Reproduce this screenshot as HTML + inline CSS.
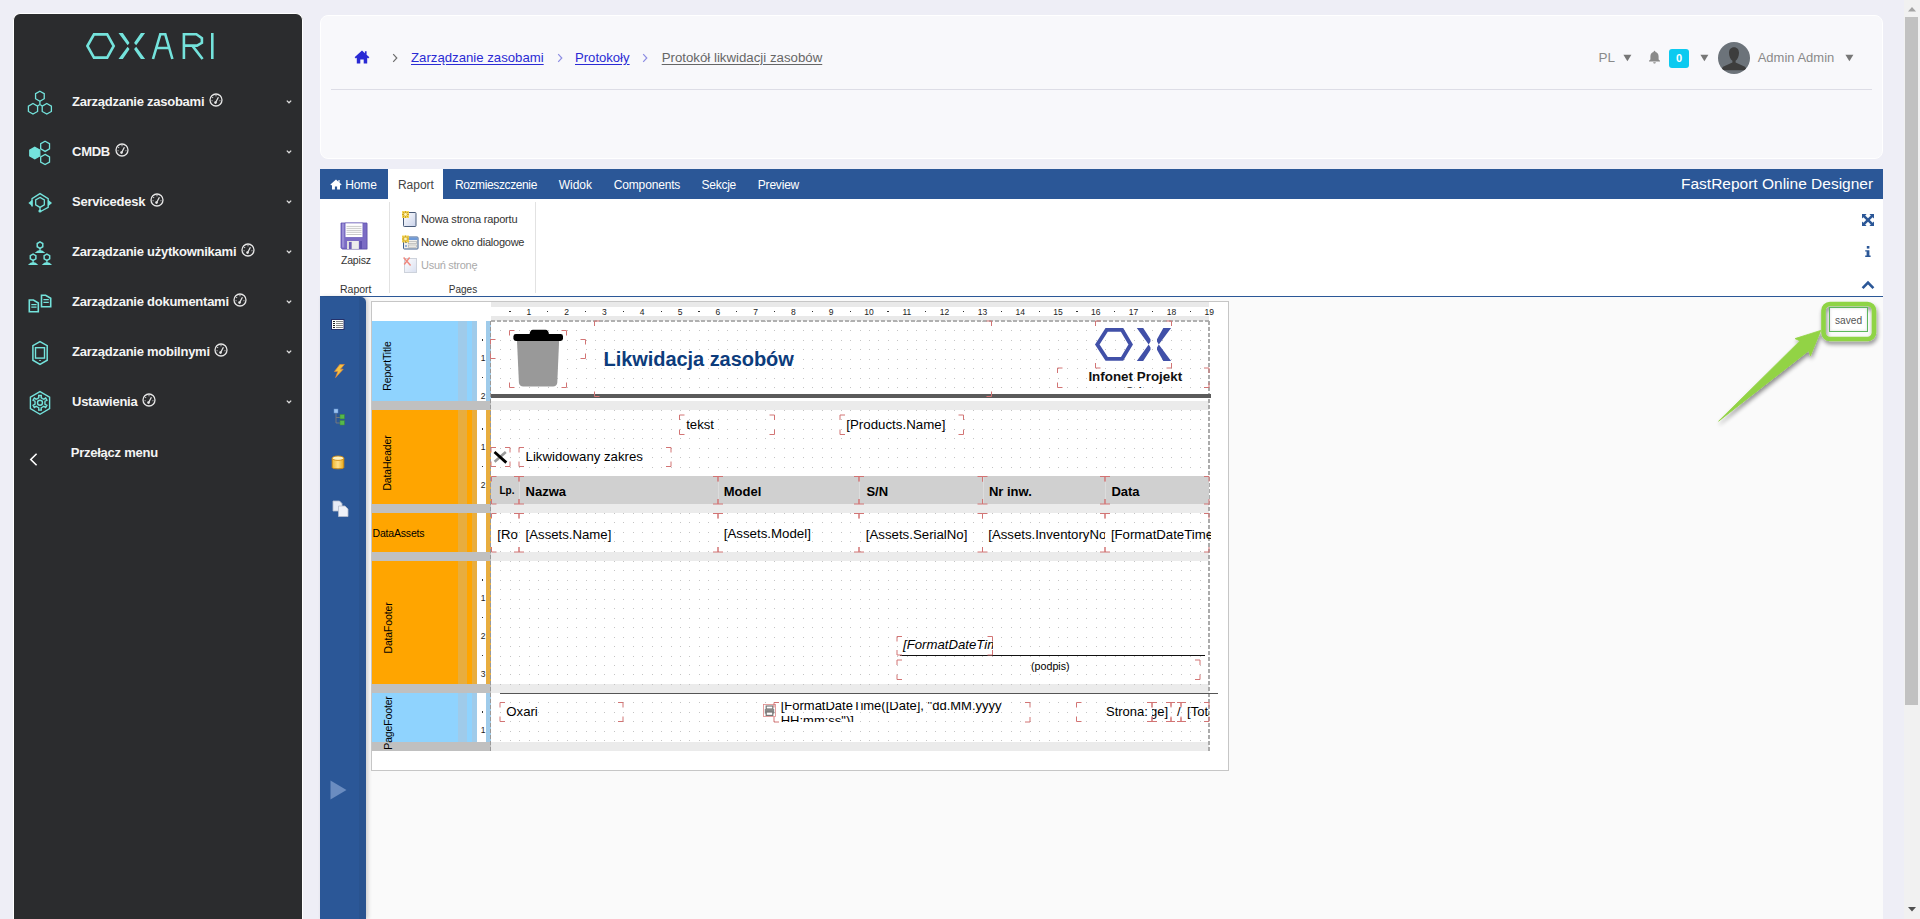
<!DOCTYPE html>
<html><head><meta charset="utf-8">
<style>
*{box-sizing:border-box;margin:0;padding:0}
html,body{width:1920px;height:919px;overflow:hidden}
body{background:#eeeef6;font-family:"Liberation Sans",sans-serif;position:relative}
.a{position:absolute}
.t{position:absolute;white-space:nowrap;line-height:1}
/* sidebar */
#sb{left:13px;top:13px;width:290px;height:920px;background:#2b2c2e;border:1px solid #fff;border-bottom:none;border-radius:7px 7px 0 0}
.mi{position:absolute;left:72px;color:#f4f4f4;font-weight:bold;font-size:13px;letter-spacing:-0.25px;line-height:1}
.chev{position:absolute;left:286px;width:6px;height:4px}
/* header */
#hd{left:320px;top:15px;width:1563px;height:144px;background:#f8f8fb;border:1px solid #fff;border-radius:8px}
/* scrollbar */
#scr{left:1904px;top:0;width:16px;height:919px;background:#f1f1f1}
#thumb{left:1905px;top:17px;width:13px;height:688px;background:#c1c1c1}
/* fastreport */
#tabs{left:320px;top:169px;width:1563px;height:30px;background:#2b5797}
.tab{position:absolute;top:180px;color:#fff;font-size:12px;letter-spacing:-0.4px;line-height:1}
#rib{left:320px;top:199px;width:1563px;height:98px;background:#fff;border-bottom:1px solid #2b5797}
#lt{left:320px;top:297px;width:46px;height:622px;background:linear-gradient(90deg,#2b5797 0 39px,#29538f 39px);border-radius:0 5px 0 0;box-shadow:2px 0 4px rgba(0,0,0,0.18)}
#ws{left:366px;top:297px;width:1517px;height:622px;background:#fafafa}
</style></head>
<body>
<!-- Sidebar -->
<div id="sb" class="a"></div>
<svg class="a" style="left:80px;top:25px" width="140" height="40" viewBox="0 0 140 40" fill="none" stroke="#74e3dc" stroke-width="2.6">
<path d="M7.4 21L14 9.4H27.2L33.7 21L27.2 32.6H14Z"/>
<path d="M38.5 8H42.8L49.3 17.4V18.2L47.6 20.2Z M38.5 34H42.8L49.3 24.6V23.8L47.6 21.8Z M65.1 8H60.9L54.3 17.4V18.2L56.2 20.2Z M65.1 34H60.9L54.3 24.6V23.8L56.2 21.8Z" fill="#74e3dc" stroke="none"/>
<path d="M73 34L80.3 9.3H85.3L92.4 34M75.6 23H89.8"/>
<path d="M103.9 34V9.3H116.4L121.9 13.2V17.8L117 20.6H103.9M112.3 20.6L122.6 34"/>
<path d="M132.3 8V34"/>
</svg>
<svg class="a" style="left:24px;top:86px" width="32" height="32" viewBox="0 0 32 32" fill="none" stroke="#74e3dc" stroke-width="1.3"><path d="M15.90,5.20 L20.23,7.70 L20.23,12.70 L15.90,15.20 L11.57,12.70 L11.57,7.70Z"/><path d="M9.00,17.50 L13.59,20.15 L13.59,25.45 L9.00,28.10 L4.41,25.45 L4.41,20.15Z"/><path d="M22.80,17.50 L27.39,20.15 L27.39,25.45 L22.80,28.10 L18.21,25.45 L18.21,20.15Z"/><path d="M15.9 15.2V18.5M13.5 20L15.9 18.5L18.3 20"/></svg>
<div class="mi" id="mi0" style="top:94.8px">Zarządzanie zasobami<svg style="display:inline-block;vertical-align:top;margin-left:4.6px;margin-top:-2px" width="14" height="14" viewBox="0 0 14 14" fill="none" stroke="#e6e6e6" stroke-width="1.3"><circle cx="7" cy="7" r="6"/><path d="M6.6 9.6L9.4 4.2" stroke-width="1.2"/><circle cx="6.5" cy="9.6" r="1.3" fill="#e6e6e6" stroke="none"/><path d="M7 2.3V3.3M3.4 4.2L4 4.8M2.6 7.7H3.5M11.4 7.7H10.5" stroke-width="1.1"/></svg></div>
<svg class="a" style="left:285px;top:99px" width="8" height="6" viewBox="0 0 8 6" fill="none" stroke="#ddd" stroke-width="1.3"><path d="M1.8 1.6L4 3.8L6.2 1.6"/></svg>
<svg class="a" style="left:24px;top:136px" width="32" height="32" viewBox="0 0 32 32" fill="none" stroke="#74e3dc" stroke-width="1.3"><path d="M10.80,11.20 L15.82,14.10 L15.82,19.90 L10.80,22.80 L5.78,19.90 L5.78,14.10Z" fill="#74e3dc"/><path d="M21.10,5.20 L25.52,7.75 L25.52,12.85 L21.10,15.40 L16.68,12.85 L16.68,7.75Z"/><path d="M21.10,18.40 L25.52,20.95 L25.52,26.05 L21.10,28.60 L16.68,26.05 L16.68,20.95Z"/></svg>
<div class="mi" id="mi1" style="top:144.8px">CMDB<svg style="display:inline-block;vertical-align:top;margin-left:4.6px;margin-top:-2px" width="14" height="14" viewBox="0 0 14 14" fill="none" stroke="#e6e6e6" stroke-width="1.3"><circle cx="7" cy="7" r="6"/><path d="M6.6 9.6L9.4 4.2" stroke-width="1.2"/><circle cx="6.5" cy="9.6" r="1.3" fill="#e6e6e6" stroke="none"/><path d="M7 2.3V3.3M3.4 4.2L4 4.8M2.6 7.7H3.5M11.4 7.7H10.5" stroke-width="1.1"/></svg></div>
<svg class="a" style="left:285px;top:149px" width="8" height="6" viewBox="0 0 8 6" fill="none" stroke="#ddd" stroke-width="1.3"><path d="M1.8 1.6L4 3.8L6.2 1.6"/></svg>
<svg class="a" style="left:24px;top:186px" width="32" height="32" viewBox="0 0 32 32" fill="none" stroke="#74e3dc" stroke-width="1.3"><path d="M8 20.5V12.6L16 7.6L24.2 12.6V21.3L17 25.2"/><path d="M16.00,11.40 L20.33,13.90 L20.33,18.90 L16.00,21.40 L11.67,18.90 L11.67,13.90Z"/><path d="M16 21.4V24.5"/><circle cx="16" cy="25" r="1.6" fill="#74e3dc" stroke="none"/><path d="M4.4 17L8.5 13.6V20.4Z" fill="#74e3dc" stroke="none"/><path d="M28 17L23.9 13.6V20.4Z" fill="#74e3dc" stroke="none"/></svg>
<div class="mi" id="mi2" style="top:194.8px">Servicedesk<svg style="display:inline-block;vertical-align:top;margin-left:4.6px;margin-top:-2px" width="14" height="14" viewBox="0 0 14 14" fill="none" stroke="#e6e6e6" stroke-width="1.3"><circle cx="7" cy="7" r="6"/><path d="M6.6 9.6L9.4 4.2" stroke-width="1.2"/><circle cx="6.5" cy="9.6" r="1.3" fill="#e6e6e6" stroke="none"/><path d="M7 2.3V3.3M3.4 4.2L4 4.8M2.6 7.7H3.5M11.4 7.7H10.5" stroke-width="1.1"/></svg></div>
<svg class="a" style="left:285px;top:199px" width="8" height="6" viewBox="0 0 8 6" fill="none" stroke="#ddd" stroke-width="1.3"><path d="M1.8 1.6L4 3.8L6.2 1.6"/></svg>
<svg class="a" style="left:24px;top:236px" width="32" height="32" viewBox="0 0 32 32" fill="none" stroke="#74e3dc" stroke-width="1.3"><path d="M16.00,5.90 L18.77,7.50 L18.77,10.70 L16.00,12.30 L13.23,10.70 L13.23,7.50Z" stroke-width="1.5"/><path d="M10.7 17.0Q16 11.0 21.3 17.0Z" fill="#74e3dc" stroke="none"/><path d="M16 12.1V14.5" stroke-width="1.2"/><path d="M9.10,18.10 L11.87,19.70 L11.87,22.90 L9.10,24.50 L6.33,22.90 L6.33,19.70Z" stroke-width="1.5"/><path d="M3.8999999999999995 29.0Q9.1 23.0 14.3 29.0Z" fill="#74e3dc" stroke="none"/><path d="M9.1 24.3V26.5" stroke-width="1.2"/><path d="M22.90,18.10 L25.67,19.70 L25.67,22.90 L22.90,24.50 L20.13,22.90 L20.13,19.70Z" stroke-width="1.5"/><path d="M17.7 29.0Q22.9 23.0 28.099999999999998 29.0Z" fill="#74e3dc" stroke="none"/><path d="M22.9 24.3V26.5" stroke-width="1.2"/></svg>
<div class="mi" id="mi3" style="top:244.8px">Zarządzanie użytkownikami<svg style="display:inline-block;vertical-align:top;margin-left:4.6px;margin-top:-2px" width="14" height="14" viewBox="0 0 14 14" fill="none" stroke="#e6e6e6" stroke-width="1.3"><circle cx="7" cy="7" r="6"/><path d="M6.6 9.6L9.4 4.2" stroke-width="1.2"/><circle cx="6.5" cy="9.6" r="1.3" fill="#e6e6e6" stroke="none"/><path d="M7 2.3V3.3M3.4 4.2L4 4.8M2.6 7.7H3.5M11.4 7.7H10.5" stroke-width="1.1"/></svg></div>
<svg class="a" style="left:285px;top:249px" width="8" height="6" viewBox="0 0 8 6" fill="none" stroke="#ddd" stroke-width="1.3"><path d="M1.8 1.6L4 3.8L6.2 1.6"/></svg>
<svg class="a" style="left:24px;top:286px" width="32" height="32" viewBox="0 0 32 32" fill="none" stroke="#74e3dc" stroke-width="1.3"><path d="M5.3 14H9.4L14.3 17V25.7H5.3Z" stroke-width="1.6"/><path d="M7.3 18.6H12.6M7.3 21.2H12.6"/><path d="M17.5 9.2H21.6L26.7 12.2V20.8H17.5Z" stroke-width="1.6"/><path d="M19.4 13.6H24.8M19.4 16.4H24.8"/></svg>
<div class="mi" id="mi4" style="top:294.8px">Zarządzanie dokumentami<svg style="display:inline-block;vertical-align:top;margin-left:4.6px;margin-top:-2px" width="14" height="14" viewBox="0 0 14 14" fill="none" stroke="#e6e6e6" stroke-width="1.3"><circle cx="7" cy="7" r="6"/><path d="M6.6 9.6L9.4 4.2" stroke-width="1.2"/><circle cx="6.5" cy="9.6" r="1.3" fill="#e6e6e6" stroke="none"/><path d="M7 2.3V3.3M3.4 4.2L4 4.8M2.6 7.7H3.5M11.4 7.7H10.5" stroke-width="1.1"/></svg></div>
<svg class="a" style="left:285px;top:299px" width="8" height="6" viewBox="0 0 8 6" fill="none" stroke="#ddd" stroke-width="1.3"><path d="M1.8 1.6L4 3.8L6.2 1.6"/></svg>
<svg class="a" style="left:24px;top:336px" width="32" height="32" viewBox="0 0 32 32" fill="none" stroke="#74e3dc" stroke-width="1.3"><path d="M16 5.6L23.2 9.6V24.2L16 28.4L8.9 24.2V9.6Z" stroke-width="1.5"/><rect x="11.5" y="11.7" width="9" height="10.4" stroke-width="1.4"/><ellipse cx="16" cy="24.5" rx="1.1" ry="0.6" fill="#74e3dc" stroke="none"/></svg>
<div class="mi" id="mi5" style="top:344.8px">Zarządzanie mobilnymi<svg style="display:inline-block;vertical-align:top;margin-left:4.6px;margin-top:-2px" width="14" height="14" viewBox="0 0 14 14" fill="none" stroke="#e6e6e6" stroke-width="1.3"><circle cx="7" cy="7" r="6"/><path d="M6.6 9.6L9.4 4.2" stroke-width="1.2"/><circle cx="6.5" cy="9.6" r="1.3" fill="#e6e6e6" stroke="none"/><path d="M7 2.3V3.3M3.4 4.2L4 4.8M2.6 7.7H3.5M11.4 7.7H10.5" stroke-width="1.1"/></svg></div>
<svg class="a" style="left:285px;top:349px" width="8" height="6" viewBox="0 0 8 6" fill="none" stroke="#ddd" stroke-width="1.3"><path d="M1.8 1.6L4 3.8L6.2 1.6"/></svg>
<svg class="a" style="left:24px;top:386px" width="32" height="32" viewBox="0 0 32 32" fill="none" stroke="#74e3dc" stroke-width="1.3"><path d="M16 5.6L25.6 11.1V22.7L16 28.3L6.4 22.7V11.1Z" stroke-width="1.4"/><path d="M13.55,12.56 L14.81,11.64 L14.72,9.51 L17.28,9.51 L17.19,11.64 L18.45,12.56 L19.88,13.19 L21.67,12.04 L22.95,14.27 L21.07,15.25 L20.90,16.80 L21.07,18.35 L22.95,19.33 L21.67,21.56 L19.88,20.41 L18.45,21.04 L17.19,21.96 L17.28,24.09 L14.72,24.09 L14.81,21.96 L13.55,21.04 L12.12,20.41 L10.33,21.56 L9.05,19.33 L10.93,18.35 L11.10,16.80 L10.93,15.25 L9.05,14.27 L10.33,12.04 L12.12,13.19Z" stroke-width="1.4"/><circle cx="16" cy="16.8" r="2.5" stroke-width="1.4"/></svg>
<div class="mi" id="mi6" style="top:394.8px">Ustawienia<svg style="display:inline-block;vertical-align:top;margin-left:4.6px;margin-top:-2px" width="14" height="14" viewBox="0 0 14 14" fill="none" stroke="#e6e6e6" stroke-width="1.3"><circle cx="7" cy="7" r="6"/><path d="M6.6 9.6L9.4 4.2" stroke-width="1.2"/><circle cx="6.5" cy="9.6" r="1.3" fill="#e6e6e6" stroke="none"/><path d="M7 2.3V3.3M3.4 4.2L4 4.8M2.6 7.7H3.5M11.4 7.7H10.5" stroke-width="1.1"/></svg></div>
<svg class="a" style="left:285px;top:399px" width="8" height="6" viewBox="0 0 8 6" fill="none" stroke="#ddd" stroke-width="1.3"><path d="M1.8 1.6L4 3.8L6.2 1.6"/></svg>
<svg class="a" style="left:28px;top:452px" width="12" height="15" viewBox="0 0 12 15" fill="none" stroke="#fff" stroke-width="1.6"><path d="M8.6 1.8L2.8 7.5L8.6 13.2"/></svg>
<div class="mi" style="top:446.1px;left:70.8px">Przełącz menu</div>

<!-- Header card -->
<div id="hd" class="a"></div>
<div class="a" style="left:331px;top:89px;width:1541px;height:1px;background:#dddde6"></div>
<svg class="a" style="left:354px;top:50px" width="16" height="14" viewBox="0 0 16 14"><path d="M8 0.6L0.6 7.2L1.9 8.5L2.8 7.7V13.6H6.3V9.6H9.7V13.6H13.2V7.7L14.1 8.5L15.4 7.2L12.6 4.7V1.2H10.9V3.2Z" fill="#2a2ad4"/></svg>
<svg class="a" style="left:392px;top:53px" width="6" height="10" viewBox="0 0 6 10" fill="none" stroke="#6e6e6e" stroke-width="1.2"><path d="M1.2 1.2L4.8 5L1.2 8.8"/></svg>
<div class="t" style="left:411px;top:50.7px;font-size:13.2px;color:#2b2bd4;text-decoration:underline;text-underline-offset:1.5px">Zarządzanie zasobami</div>
<svg class="a" style="left:557px;top:53px" width="6" height="10" viewBox="0 0 6 10" fill="none" stroke="#8d8de3" stroke-width="1.2"><path d="M1.2 1.2L4.8 5L1.2 8.8"/></svg>
<div class="t" style="left:575px;top:50.8px;font-size:13.1px;color:#2b2bd4;text-decoration:underline;text-underline-offset:1.5px">Protokoły</div>
<svg class="a" style="left:642px;top:53px" width="6" height="10" viewBox="0 0 6 10" fill="none" stroke="#8d8de3" stroke-width="1.2"><path d="M1.2 1.2L4.8 5L1.2 8.8"/></svg>
<div class="t" style="left:661.7px;top:50.7px;font-size:13.25px;color:#666;text-decoration:underline;text-underline-offset:1.5px">Protokół likwidacji zasobów</div>
<div class="t" style="left:1598.4px;top:51.3px;font-size:13px;color:#8a8a8a;font-size:13.5px">PL</div>
<svg class="a" style="left:1622.5px;top:54px" width="9" height="8" viewBox="0 0 9 8"><path d="M0.4 0.8H8.4L4.4 7.2Z" fill="#777"/></svg>
<svg class="a" style="left:1648px;top:50px" width="13" height="14" viewBox="0 0 13 14"><path d="M6.5 0.8C6 0.8 5.6 1.2 5.6 1.7V2.1C3.6 2.6 2.4 4.3 2.4 6.4V9.4L1 10.8V11.5H12V10.8L10.6 9.4V6.4C10.6 4.3 9.4 2.6 7.4 2.1V1.7C7.4 1.2 7 0.8 6.5 0.8ZM5.2 12.2C5.2 12.9 5.8 13.5 6.5 13.5S7.8 12.9 7.8 12.2Z" fill="#8a8a8a"/></svg>
<div class="a" style="left:1669px;top:49px;width:20px;height:19px;background:#0ccaf0;border-radius:3px;color:#fff;font-weight:bold;font-size:11px;line-height:19px;text-align:center">0</div>
<svg class="a" style="left:1699.5px;top:54px" width="9" height="8" viewBox="0 0 9 8"><path d="M0.4 0.8H8.4L4.4 7.2Z" fill="#777"/></svg>
<svg class="a" style="left:1718px;top:42px" width="32" height="32" viewBox="0 0 32 32"><defs><clipPath id="av"><circle cx="16" cy="16" r="16"/></clipPath></defs><circle cx="16" cy="16" r="16" fill="#6c737a"/><g clip-path="url(#av)" fill="#3d3d3d"><path d="M16 5.2C12.9 5.2 11 7.4 11 10.8C11 14.2 12.4 17.6 14.4 18.8V20.4L5 24.8L2.6 28.2H29.4L27 24.8L17.6 20.4V18.8C19.6 17.6 21 14.2 21 10.8C21 7.4 19.1 5.2 16 5.2Z"/></g></svg>
<div class="t" style="left:1757.7px;top:51.3px;font-size:13px;color:#8a8a8a">Admin Admin</div>
<svg class="a" style="left:1844.7px;top:54px" width="9" height="8" viewBox="0 0 9 8"><path d="M0.4 0.8H8.4L4.4 7.2Z" fill="#777"/></svg>

<!-- FastReport -->
<div id="tabs" class="a"></div>
<div id="rib" class="a"></div>
<div id="ws" class="a"></div>
<div id="lt" class="a"></div>
<div class="a" style="left:388px;top:169px;width:55px;height:30px;background:#fff"></div>
<svg class="a" style="left:330px;top:179px" width="12" height="11" viewBox="0 0 12 11"><path d="M6 0.6L0.4 5.6L1.2 6.4L2 5.8V10.6H4.9V7.6H7.1V10.6H10V5.8L10.8 6.4L11.6 5.6L9.6 3.8V1H8.4V2.8Z" fill="#fff"/></svg>
<div class="t" style="left:345.2px;top:178.7px;font-size:12px;color:#fff;letter-spacing:-0.1px">Home</div>
<div class="t" style="left:397.9px;top:178.8px;font-size:12px;color:#444">Raport</div>
<div class="t" style="left:454.9px;top:179.0px;font-size:12px;color:#fff;letter-spacing:-0.38px">Rozmieszczenie</div>
<div class="t" style="left:558.8px;top:179.0px;font-size:12px;color:#fff;letter-spacing:-0.05px">Widok</div>
<div class="t" style="left:613.8px;top:179.0px;font-size:12px;color:#fff;letter-spacing:-0.17px">Components</div>
<div class="t" style="left:701.5px;top:179.0px;font-size:12px;color:#fff;letter-spacing:-0.25px">Sekcje</div>
<div class="t" style="left:757.8px;top:179.0px;font-size:12px;color:#fff;letter-spacing:-0.2px">Preview</div>
<div class="t" style="left:1681px;top:176.3px;font-size:15.5px;color:#fff">FastReport Online Designer</div>
<svg class="a" style="left:340px;top:222px" width="29" height="29" viewBox="0 0 29 29">
<rect x="2" y="2" width="26" height="26" fill="#000" opacity="0.08"/>
<path d="M1 1H27V27H2.2L1 25.8Z" fill="#7b6cc4" stroke="#5e4fae" stroke-width="0.8"/>
<rect x="2" y="1.5" width="2.2" height="24" fill="#9a8fd6"/>
<rect x="5.1" y="1" width="17.8" height="14.3" fill="#fff" stroke="#6a5cb8" stroke-width="0.6"/>
<path d="M6.5 4.4H21.5M6.5 6.4H21.5M6.5 8.4H21.5M6.5 10.3H21.5M6.5 12.5H21.5" stroke="#c4c4c4" stroke-width="0.9"/>
<rect x="7" y="19" width="11.8" height="8" fill="#dedede"/>
<rect x="12" y="19" width="6.5" height="7.5" fill="#ececec"/>
<rect x="9" y="20" width="2.6" height="7" fill="#6b5cb8"/>
<rect x="19.4" y="19" width="2.6" height="8" fill="#5e50ae"/>
</svg>
<div class="t" style="left:341px;top:254.6px;font-size:10.5px;color:#333;letter-spacing:-0.2px">Zapisz</div>
<div class="t" style="left:340px;top:284.1px;font-size:10.5px;color:#333">Raport</div>
<div class="a" style="left:389px;top:202px;width:1px;height:91px;background:#e2e2e2"></div>
<div class="a" style="left:535px;top:202px;width:1px;height:91px;background:#e2e2e2"></div>
<svg class="a" style="left:401px;top:210px" width="20" height="65" viewBox="0 0 20 65">
<defs><linearGradient id="pg" x1="0" y1="0" x2="1" y2="1"><stop offset="0" stop-color="#fff"/><stop offset="1" stop-color="#c9d2ea"/></linearGradient></defs>
<rect x="2.5" y="2.5" width="12.5" height="14" fill="url(#pg)" stroke="#485a78" stroke-width="1" rx="0.8"/>
<g transform="translate(1,1)"><rect x="0" y="0" width="7" height="7" fill="#f3d24a" opacity="0.9"/><path d="M3.5 0V7M0 3.5H7M1 1L6 6M6 1L1 6" stroke="#c99a10" stroke-width="0.8"/><circle cx="3.5" cy="3.5" r="1.4" fill="#fff8c0"/></g>
<rect x="2.5" y="27" width="14.5" height="12" fill="#f0efea" stroke="#3f5f8f" stroke-width="1" rx="0.8"/>
<rect x="3" y="27.4" width="13.6" height="2.6" fill="#6f9ad8"/>
<path d="M4 32.5H6M4 36H6" stroke="#3a70c8" stroke-width="1"/>
<rect x="7.5" y="31.5" width="8" height="2.2" fill="none" stroke="#a8a8a8" stroke-width="0.6"/>
<rect x="7.5" y="35" width="8" height="2.2" fill="none" stroke="#a8a8a8" stroke-width="0.6"/>
<g transform="translate(1,25.5)"><rect x="0" y="0" width="7" height="7" fill="#f3d24a" opacity="0.9"/><path d="M3.5 0V7M0 3.5H7M1 1L6 6M6 1L1 6" stroke="#c99a10" stroke-width="0.8"/><circle cx="3.5" cy="3.5" r="1.4" fill="#fff8c0"/></g>
<rect x="3.5" y="48.5" width="12" height="14" fill="url(#pg)" stroke="#b8c0cc" stroke-width="1" opacity="0.7"/>
<path d="M2.6 47.5L9.6 55.5M8.6 47.5L3.2 54.5" stroke="#f08a80" stroke-width="1.5"/>
</svg>
<div class="t" style="left:421px;top:214.0px;font-size:11px;color:#333;letter-spacing:-0.17px">Nowa strona raportu</div>
<div class="t" style="left:421px;top:236.5px;font-size:11px;color:#333;letter-spacing:-0.23px">Nowe okno dialogowe</div>
<div class="t" style="left:421px;top:259.8px;font-size:11px;color:#aaa;letter-spacing:-0.28px">Usuń stronę</div>
<div class="t" style="left:448.8px;top:284.5px;font-size:10px;color:#333">Pages</div>
<svg class="a" style="left:1861px;top:213px" width="14" height="14" viewBox="0 0 14 14" fill="#2b5797">
<path d="M1 1H5.6L4.2 2.4L7 5.2L9.8 2.4L8.4 1H13V5.6L11.6 4.2L8.8 7L11.6 9.8L13 8.4V13H8.4L9.8 11.6L7 8.8L4.2 11.6L5.6 13H1V8.4L2.4 9.8L5.2 7L2.4 4.2L1 5.6Z"/></svg>
<svg class="a" style="left:1864px;top:245px" width="8" height="13" viewBox="0 0 8 13" fill="#2b5797">
<rect x="2.8" y="1" width="2.6" height="2.6"/><path d="M1.2 5.2H5.4V10.6H6.6V12H1.2V10.6H2.6V6.6H1.2Z"/></svg>
<svg class="a" style="left:1861px;top:280px" width="14" height="10" viewBox="0 0 14 10" fill="none" stroke="#2b5797" stroke-width="2.6"><path d="M1.6 8.2L7 2.6L12.4 8.2"/></svg>
<svg class="a" style="left:331px;top:318px" width="14" height="13" viewBox="0 0 14 13">
<rect x="0.5" y="1.5" width="12.5" height="10" fill="#fdfdfd" stroke="#24306a" stroke-width="1"/>
<path d="M2 3.5H4M2 5.5H4M2 7.5H4M2 9.5H4" stroke="#222" stroke-width="1"/>
<path d="M5 3.5H12M5 5.5H12M5 7.5H12M5 9.5H12" stroke="#8a8a8a" stroke-width="1"/></svg>
<svg class="a" style="left:333px;top:364px" width="12" height="14" viewBox="0 0 12 14">
<path d="M6.8 0.4H11.4L7.4 5.2H10.2L2.6 13.6L4.8 7.6H1.4Z" fill="#f5c242" stroke="#e3863a" stroke-width="0.7"/></svg>
<svg class="a" style="left:333px;top:408px" width="13" height="18" viewBox="0 0 13 18">
<path d="M3 5V15H7.5M3 9.5H7.5" fill="none" stroke="#7a7a7a" stroke-width="0.9"/>
<rect x="1" y="1" width="4" height="4" fill="#9cc4f0" stroke="#5f8fd0" stroke-width="0.5"/>
<rect x="7" y="6.5" width="4.4" height="4.4" fill="#56b84a" stroke="#3c8c34" stroke-width="0.5"/>
<rect x="7" y="12.6" width="4.4" height="4.4" fill="#56b84a" stroke="#3c8c34" stroke-width="0.5"/></svg>
<svg class="a" style="left:331px;top:455px" width="14" height="16" viewBox="0 0 14 16">
<defs><linearGradient id="db" x1="0" x2="1"><stop offset="0" stop-color="#f0b830"/><stop offset="0.5" stop-color="#ffe08a"/><stop offset="1" stop-color="#e8a818"/></linearGradient></defs>
<path d="M1.2 3.2V12.6C1.2 14.2 12.8 14.2 12.8 12.6V3.2Z" fill="url(#db)" stroke="#d08a10" stroke-width="0.9"/>
<ellipse cx="7" cy="3.2" rx="5.8" ry="2.2" fill="#fff3c0" stroke="#d08a10" stroke-width="0.9"/></svg>
<svg class="a" style="left:332px;top:500px" width="18" height="18" viewBox="0 0 18 18">
<path d="M1 1H7.5L10 3.5V11H1Z" fill="#e8ecf6" stroke="#b5bccc" stroke-width="0.8"/>
<path d="M6.5 6H13L16 9V16.5H6.5Z" fill="#eef1f8" stroke="#b5bccc" stroke-width="0.8"/></svg>
<svg class="a" style="left:330px;top:780px" width="17" height="20" viewBox="0 0 17 20"><path d="M0.5 0.5L16.5 10L0.5 19.5Z" fill="#6a8cc0"/></svg>


<!-- saved -->
<svg class="a" style="left:1700px;top:290px" width="190" height="145" viewBox="0 0 190 145">
<defs><filter id="sh" x="-30%" y="-30%" width="160%" height="160%"><feGaussianBlur in="SourceAlpha" stdDeviation="2.2"/><feOffset dx="1" dy="2.5"/><feComponentTransfer><feFuncA type="linear" slope="0.45"/></feComponentTransfer><feMerge><feMergeNode/><feMergeNode in="SourceGraphic"/></feMerge></filter></defs>
<g filter="url(#sh)">
<rect x="123.5" y="14" width="50.5" height="35" rx="6.5" fill="none" stroke="#8fd444" stroke-width="4.6"/>
<path d="M18.6 131.2L99.9 50.9L95 48.6L120.8 40.4L110.4 65.9L108.7 60.7Z" fill="#92d344" stroke="#92d344" stroke-width="0.8" stroke-linejoin="round"/>
</g>
</svg>
<div class="a" style="left:1829px;top:307px;width:39px;height:25px;background:#fff;border:1px solid #5cb85c;box-shadow:inset 0 0 3px rgba(0,0,0,0.15)"></div>
<div class="t" style="left:1835px;top:315.5px;font-size:10.2px;color:#555">saved</div>



<!-- REPORT START -->
<div class="a" style="left:371px;top:301px;width:858px;height:470px;background:#fff;border:1px solid #c6c6c6"></div>
<div class="a" style="left:491px;top:302px;width:718px;height:5px;background:#e9e9e9"></div>
<div class="a" style="left:491px;top:316px;width:718px;height:5px;background:#e9e9e9"></div>
<div class="t" style="left:518.8px;top:307.5px;width:20px;text-align:center;font-size:8.5px;color:#222">1</div>
<div class="a" style="left:509.4px;top:311px;width:1.2px;height:1.2px;background:#333"></div>
<div class="t" style="left:556.6px;top:307.5px;width:20px;text-align:center;font-size:8.5px;color:#222">2</div>
<div class="a" style="left:547.2px;top:311px;width:1.2px;height:1.2px;background:#333"></div>
<div class="t" style="left:594.4px;top:307.5px;width:20px;text-align:center;font-size:8.5px;color:#222">3</div>
<div class="a" style="left:585.0px;top:311px;width:1.2px;height:1.2px;background:#333"></div>
<div class="t" style="left:632.2px;top:307.5px;width:20px;text-align:center;font-size:8.5px;color:#222">4</div>
<div class="a" style="left:622.8px;top:311px;width:1.2px;height:1.2px;background:#333"></div>
<div class="t" style="left:670.0px;top:307.5px;width:20px;text-align:center;font-size:8.5px;color:#222">5</div>
<div class="a" style="left:660.6px;top:311px;width:1.2px;height:1.2px;background:#333"></div>
<div class="t" style="left:707.8px;top:307.5px;width:20px;text-align:center;font-size:8.5px;color:#222">6</div>
<div class="a" style="left:698.4px;top:311px;width:1.2px;height:1.2px;background:#333"></div>
<div class="t" style="left:745.6px;top:307.5px;width:20px;text-align:center;font-size:8.5px;color:#222">7</div>
<div class="a" style="left:736.2px;top:311px;width:1.2px;height:1.2px;background:#333"></div>
<div class="t" style="left:783.4px;top:307.5px;width:20px;text-align:center;font-size:8.5px;color:#222">8</div>
<div class="a" style="left:774.0px;top:311px;width:1.2px;height:1.2px;background:#333"></div>
<div class="t" style="left:821.2px;top:307.5px;width:20px;text-align:center;font-size:8.5px;color:#222">9</div>
<div class="a" style="left:811.8px;top:311px;width:1.2px;height:1.2px;background:#333"></div>
<div class="t" style="left:859.0px;top:307.5px;width:20px;text-align:center;font-size:8.5px;color:#222">10</div>
<div class="a" style="left:849.6px;top:311px;width:1.2px;height:1.2px;background:#333"></div>
<div class="t" style="left:896.8px;top:307.5px;width:20px;text-align:center;font-size:8.5px;color:#222">11</div>
<div class="a" style="left:887.4px;top:311px;width:1.2px;height:1.2px;background:#333"></div>
<div class="t" style="left:934.6px;top:307.5px;width:20px;text-align:center;font-size:8.5px;color:#222">12</div>
<div class="a" style="left:925.2px;top:311px;width:1.2px;height:1.2px;background:#333"></div>
<div class="t" style="left:972.4px;top:307.5px;width:20px;text-align:center;font-size:8.5px;color:#222">13</div>
<div class="a" style="left:963.0px;top:311px;width:1.2px;height:1.2px;background:#333"></div>
<div class="t" style="left:1010.2px;top:307.5px;width:20px;text-align:center;font-size:8.5px;color:#222">14</div>
<div class="a" style="left:1000.8px;top:311px;width:1.2px;height:1.2px;background:#333"></div>
<div class="t" style="left:1048.0px;top:307.5px;width:20px;text-align:center;font-size:8.5px;color:#222">15</div>
<div class="a" style="left:1038.6px;top:311px;width:1.2px;height:1.2px;background:#333"></div>
<div class="t" style="left:1085.8px;top:307.5px;width:20px;text-align:center;font-size:8.5px;color:#222">16</div>
<div class="a" style="left:1076.4px;top:311px;width:1.2px;height:1.2px;background:#333"></div>
<div class="t" style="left:1123.6px;top:307.5px;width:20px;text-align:center;font-size:8.5px;color:#222">17</div>
<div class="a" style="left:1114.2px;top:311px;width:1.2px;height:1.2px;background:#333"></div>
<div class="t" style="left:1161.4px;top:307.5px;width:20px;text-align:center;font-size:8.5px;color:#222">18</div>
<div class="a" style="left:1152.0px;top:311px;width:1.2px;height:1.2px;background:#333"></div>
<div class="t" style="left:1199.2px;top:307.5px;width:20px;text-align:center;font-size:8.5px;color:#222">19</div>
<div class="a" style="left:1189.8px;top:311px;width:1.2px;height:1.2px;background:#333"></div>
<div class="a" style="left:372px;top:321px;width:86px;height:80px;background:#8fd3fe"></div>
<div class="a" style="left:458px;top:321px;width:9px;height:80px;background:#9fcbea"></div>
<div class="a" style="left:467px;top:321px;width:5px;height:80px;background:#8fd3fe"></div>
<div class="a" style="left:472px;top:321px;width:5px;height:80px;background:#9fcbea"></div>
<div class="a" style="left:486px;top:321px;width:5px;height:80px;background:#9fcbea"></div>
<div class="a" style="left:372px;top:401px;width:119px;height:9px;background:#c0c0c0"></div>
<div class="a" style="left:491px;top:401px;width:718px;height:9px;background:#ebebeb"></div>
<div class="a" style="left:482px;top:339.4px;width:1.2px;height:1.2px;background:#333"></div>
<div class="t" style="left:476px;top:354.3px;width:14px;text-align:center;font-size:8.5px;color:#222">1</div>
<div class="a" style="left:482px;top:377.2px;width:1.2px;height:1.2px;background:#333"></div>
<div class="t" style="left:476px;top:392.1px;width:14px;text-align:center;font-size:8.5px;color:#222">2</div>
<div class="a" style="left:372px;top:410px;width:86px;height:94px;background:#ffa500"></div>
<div class="a" style="left:458px;top:410px;width:9px;height:94px;background:#e8ad3e"></div>
<div class="a" style="left:467px;top:410px;width:5px;height:94px;background:#ffa500"></div>
<div class="a" style="left:472px;top:410px;width:5px;height:94px;background:#e8ad3e"></div>
<div class="a" style="left:486px;top:410px;width:5px;height:94px;background:#e8ad3e"></div>
<div class="a" style="left:372px;top:504px;width:119px;height:9px;background:#c0c0c0"></div>
<div class="a" style="left:491px;top:504px;width:718px;height:9px;background:#ebebeb"></div>
<div class="a" style="left:482px;top:428.4px;width:1.2px;height:1.2px;background:#333"></div>
<div class="t" style="left:476px;top:443.3px;width:14px;text-align:center;font-size:8.5px;color:#222">1</div>
<div class="a" style="left:482px;top:466.2px;width:1.2px;height:1.2px;background:#333"></div>
<div class="t" style="left:476px;top:481.1px;width:14px;text-align:center;font-size:8.5px;color:#222">2</div>
<div class="a" style="left:372px;top:513px;width:86px;height:39px;background:#ffa500"></div>
<div class="a" style="left:458px;top:513px;width:9px;height:39px;background:#e8ad3e"></div>
<div class="a" style="left:467px;top:513px;width:5px;height:39px;background:#ffa500"></div>
<div class="a" style="left:472px;top:513px;width:5px;height:39px;background:#e8ad3e"></div>
<div class="a" style="left:486px;top:513px;width:5px;height:39px;background:#e8ad3e"></div>
<div class="a" style="left:372px;top:552px;width:119px;height:9px;background:#c0c0c0"></div>
<div class="a" style="left:491px;top:552px;width:718px;height:9px;background:#ebebeb"></div>
<div class="a" style="left:372px;top:561px;width:86px;height:123px;background:#ffa500"></div>
<div class="a" style="left:458px;top:561px;width:9px;height:123px;background:#e8ad3e"></div>
<div class="a" style="left:467px;top:561px;width:5px;height:123px;background:#ffa500"></div>
<div class="a" style="left:472px;top:561px;width:5px;height:123px;background:#e8ad3e"></div>
<div class="a" style="left:486px;top:561px;width:5px;height:123px;background:#e8ad3e"></div>
<div class="a" style="left:372px;top:684px;width:119px;height:9px;background:#c0c0c0"></div>
<div class="a" style="left:491px;top:684px;width:718px;height:9px;background:#ebebeb"></div>
<div class="a" style="left:482px;top:579.4px;width:1.2px;height:1.2px;background:#333"></div>
<div class="t" style="left:476px;top:594.3px;width:14px;text-align:center;font-size:8.5px;color:#222">1</div>
<div class="a" style="left:482px;top:617.2px;width:1.2px;height:1.2px;background:#333"></div>
<div class="t" style="left:476px;top:632.1px;width:14px;text-align:center;font-size:8.5px;color:#222">2</div>
<div class="a" style="left:482px;top:655.0px;width:1.2px;height:1.2px;background:#333"></div>
<div class="t" style="left:476px;top:669.9px;width:14px;text-align:center;font-size:8.5px;color:#222">3</div>
<div class="a" style="left:372px;top:693px;width:86px;height:49px;background:#8fd3fe"></div>
<div class="a" style="left:458px;top:693px;width:9px;height:49px;background:#9fcbea"></div>
<div class="a" style="left:467px;top:693px;width:5px;height:49px;background:#8fd3fe"></div>
<div class="a" style="left:472px;top:693px;width:5px;height:49px;background:#9fcbea"></div>
<div class="a" style="left:486px;top:693px;width:5px;height:49px;background:#9fcbea"></div>
<div class="a" style="left:372px;top:742px;width:119px;height:9px;background:#c0c0c0"></div>
<div class="a" style="left:491px;top:742px;width:718px;height:9px;background:#ebebeb"></div>
<div class="a" style="left:482px;top:711.4px;width:1.2px;height:1.2px;background:#333"></div>
<div class="t" style="left:476px;top:726.3px;width:14px;text-align:center;font-size:8.5px;color:#222">1</div>
<div class="t" style="left:348.4px;top:359.5px;width:80px;height:12px;text-align:center;font-size:10.5px;letter-spacing:-0.15px;color:#000;transform:rotate(-90deg)">ReportTitle</div>
<div class="t" style="left:348.4px;top:456.7px;width:80px;height:12px;text-align:center;font-size:10.5px;letter-spacing:-0.15px;color:#000;transform:rotate(-90deg)">DataHeader</div>
<div class="t" style="left:348.9px;top:621.7px;width:80px;height:12px;text-align:center;font-size:10.5px;letter-spacing:-0.15px;color:#000;transform:rotate(-90deg)">DataFooter</div>
<div class="t" style="left:348.9px;top:716.5px;width:80px;height:12px;text-align:center;font-size:10.5px;letter-spacing:-0.15px;color:#000;transform:rotate(-90deg)">PageFooter</div>
<div class="t" style="left:372.6px;top:528.1px;font-size:10.5px;color:#000;letter-spacing:-0.2px">DataAssets</div>
<svg class="a" style="left:0;top:0" width="1300" height="800"><path d="M500 321h1v1h-1zM510 321h1v1h-1zM519 321h1v1h-1zM529 321h1v1h-1zM538 321h1v1h-1zM548 321h1v1h-1zM557 321h1v1h-1zM567 321h1v1h-1zM576 321h1v1h-1zM586 321h1v1h-1zM595 321h1v1h-1zM604 321h1v1h-1zM614 321h1v1h-1zM623 321h1v1h-1zM633 321h1v1h-1zM642 321h1v1h-1zM652 321h1v1h-1zM661 321h1v1h-1zM671 321h1v1h-1zM680 321h1v1h-1zM689 321h1v1h-1zM699 321h1v1h-1zM708 321h1v1h-1zM718 321h1v1h-1zM727 321h1v1h-1zM737 321h1v1h-1zM746 321h1v1h-1zM756 321h1v1h-1zM765 321h1v1h-1zM774 321h1v1h-1zM784 321h1v1h-1zM793 321h1v1h-1zM803 321h1v1h-1zM812 321h1v1h-1zM822 321h1v1h-1zM831 321h1v1h-1zM841 321h1v1h-1zM850 321h1v1h-1zM860 321h1v1h-1zM869 321h1v1h-1zM878 321h1v1h-1zM888 321h1v1h-1zM897 321h1v1h-1zM907 321h1v1h-1zM916 321h1v1h-1zM926 321h1v1h-1zM935 321h1v1h-1zM945 321h1v1h-1zM954 321h1v1h-1zM964 321h1v1h-1zM973 321h1v1h-1zM982 321h1v1h-1zM992 321h1v1h-1zM1001 321h1v1h-1zM1011 321h1v1h-1zM1020 321h1v1h-1zM1030 321h1v1h-1zM1039 321h1v1h-1zM1049 321h1v1h-1zM1058 321h1v1h-1zM1067 321h1v1h-1zM1077 321h1v1h-1zM1086 321h1v1h-1zM1096 321h1v1h-1zM1105 321h1v1h-1zM1115 321h1v1h-1zM1124 321h1v1h-1zM1134 321h1v1h-1zM1143 321h1v1h-1zM1152 321h1v1h-1zM1162 321h1v1h-1zM1171 321h1v1h-1zM1181 321h1v1h-1zM1190 321h1v1h-1zM1200 321h1v1h-1zM500 330h1v1h-1zM510 330h1v1h-1zM519 330h1v1h-1zM529 330h1v1h-1zM538 330h1v1h-1zM548 330h1v1h-1zM557 330h1v1h-1zM567 330h1v1h-1zM576 330h1v1h-1zM586 330h1v1h-1zM595 330h1v1h-1zM604 330h1v1h-1zM614 330h1v1h-1zM623 330h1v1h-1zM633 330h1v1h-1zM642 330h1v1h-1zM652 330h1v1h-1zM661 330h1v1h-1zM671 330h1v1h-1zM680 330h1v1h-1zM689 330h1v1h-1zM699 330h1v1h-1zM708 330h1v1h-1zM718 330h1v1h-1zM727 330h1v1h-1zM737 330h1v1h-1zM746 330h1v1h-1zM756 330h1v1h-1zM765 330h1v1h-1zM774 330h1v1h-1zM784 330h1v1h-1zM793 330h1v1h-1zM803 330h1v1h-1zM812 330h1v1h-1zM822 330h1v1h-1zM831 330h1v1h-1zM841 330h1v1h-1zM850 330h1v1h-1zM860 330h1v1h-1zM869 330h1v1h-1zM878 330h1v1h-1zM888 330h1v1h-1zM897 330h1v1h-1zM907 330h1v1h-1zM916 330h1v1h-1zM926 330h1v1h-1zM935 330h1v1h-1zM945 330h1v1h-1zM954 330h1v1h-1zM964 330h1v1h-1zM973 330h1v1h-1zM982 330h1v1h-1zM992 330h1v1h-1zM1001 330h1v1h-1zM1011 330h1v1h-1zM1020 330h1v1h-1zM1030 330h1v1h-1zM1039 330h1v1h-1zM1049 330h1v1h-1zM1058 330h1v1h-1zM1067 330h1v1h-1zM1077 330h1v1h-1zM1086 330h1v1h-1zM1096 330h1v1h-1zM1105 330h1v1h-1zM1115 330h1v1h-1zM1124 330h1v1h-1zM1134 330h1v1h-1zM1143 330h1v1h-1zM1152 330h1v1h-1zM1162 330h1v1h-1zM1171 330h1v1h-1zM1181 330h1v1h-1zM1190 330h1v1h-1zM1200 330h1v1h-1zM500 340h1v1h-1zM510 340h1v1h-1zM519 340h1v1h-1zM529 340h1v1h-1zM538 340h1v1h-1zM548 340h1v1h-1zM557 340h1v1h-1zM567 340h1v1h-1zM576 340h1v1h-1zM586 340h1v1h-1zM595 340h1v1h-1zM604 340h1v1h-1zM614 340h1v1h-1zM623 340h1v1h-1zM633 340h1v1h-1zM642 340h1v1h-1zM652 340h1v1h-1zM661 340h1v1h-1zM671 340h1v1h-1zM680 340h1v1h-1zM689 340h1v1h-1zM699 340h1v1h-1zM708 340h1v1h-1zM718 340h1v1h-1zM727 340h1v1h-1zM737 340h1v1h-1zM746 340h1v1h-1zM756 340h1v1h-1zM765 340h1v1h-1zM774 340h1v1h-1zM784 340h1v1h-1zM793 340h1v1h-1zM803 340h1v1h-1zM812 340h1v1h-1zM822 340h1v1h-1zM831 340h1v1h-1zM841 340h1v1h-1zM850 340h1v1h-1zM860 340h1v1h-1zM869 340h1v1h-1zM878 340h1v1h-1zM888 340h1v1h-1zM897 340h1v1h-1zM907 340h1v1h-1zM916 340h1v1h-1zM926 340h1v1h-1zM935 340h1v1h-1zM945 340h1v1h-1zM954 340h1v1h-1zM964 340h1v1h-1zM973 340h1v1h-1zM982 340h1v1h-1zM992 340h1v1h-1zM1001 340h1v1h-1zM1011 340h1v1h-1zM1020 340h1v1h-1zM1030 340h1v1h-1zM1039 340h1v1h-1zM1049 340h1v1h-1zM1058 340h1v1h-1zM1067 340h1v1h-1zM1077 340h1v1h-1zM1086 340h1v1h-1zM1096 340h1v1h-1zM1105 340h1v1h-1zM1115 340h1v1h-1zM1124 340h1v1h-1zM1134 340h1v1h-1zM1143 340h1v1h-1zM1152 340h1v1h-1zM1162 340h1v1h-1zM1171 340h1v1h-1zM1181 340h1v1h-1zM1190 340h1v1h-1zM1200 340h1v1h-1zM500 349h1v1h-1zM510 349h1v1h-1zM519 349h1v1h-1zM529 349h1v1h-1zM538 349h1v1h-1zM548 349h1v1h-1zM557 349h1v1h-1zM567 349h1v1h-1zM576 349h1v1h-1zM586 349h1v1h-1zM595 349h1v1h-1zM604 349h1v1h-1zM614 349h1v1h-1zM623 349h1v1h-1zM633 349h1v1h-1zM642 349h1v1h-1zM652 349h1v1h-1zM661 349h1v1h-1zM671 349h1v1h-1zM680 349h1v1h-1zM689 349h1v1h-1zM699 349h1v1h-1zM708 349h1v1h-1zM718 349h1v1h-1zM727 349h1v1h-1zM737 349h1v1h-1zM746 349h1v1h-1zM756 349h1v1h-1zM765 349h1v1h-1zM774 349h1v1h-1zM784 349h1v1h-1zM793 349h1v1h-1zM803 349h1v1h-1zM812 349h1v1h-1zM822 349h1v1h-1zM831 349h1v1h-1zM841 349h1v1h-1zM850 349h1v1h-1zM860 349h1v1h-1zM869 349h1v1h-1zM878 349h1v1h-1zM888 349h1v1h-1zM897 349h1v1h-1zM907 349h1v1h-1zM916 349h1v1h-1zM926 349h1v1h-1zM935 349h1v1h-1zM945 349h1v1h-1zM954 349h1v1h-1zM964 349h1v1h-1zM973 349h1v1h-1zM982 349h1v1h-1zM992 349h1v1h-1zM1001 349h1v1h-1zM1011 349h1v1h-1zM1020 349h1v1h-1zM1030 349h1v1h-1zM1039 349h1v1h-1zM1049 349h1v1h-1zM1058 349h1v1h-1zM1067 349h1v1h-1zM1077 349h1v1h-1zM1086 349h1v1h-1zM1096 349h1v1h-1zM1105 349h1v1h-1zM1115 349h1v1h-1zM1124 349h1v1h-1zM1134 349h1v1h-1zM1143 349h1v1h-1zM1152 349h1v1h-1zM1162 349h1v1h-1zM1171 349h1v1h-1zM1181 349h1v1h-1zM1190 349h1v1h-1zM1200 349h1v1h-1zM500 359h1v1h-1zM510 359h1v1h-1zM519 359h1v1h-1zM529 359h1v1h-1zM538 359h1v1h-1zM548 359h1v1h-1zM557 359h1v1h-1zM567 359h1v1h-1zM576 359h1v1h-1zM586 359h1v1h-1zM595 359h1v1h-1zM604 359h1v1h-1zM614 359h1v1h-1zM623 359h1v1h-1zM633 359h1v1h-1zM642 359h1v1h-1zM652 359h1v1h-1zM661 359h1v1h-1zM671 359h1v1h-1zM680 359h1v1h-1zM689 359h1v1h-1zM699 359h1v1h-1zM708 359h1v1h-1zM718 359h1v1h-1zM727 359h1v1h-1zM737 359h1v1h-1zM746 359h1v1h-1zM756 359h1v1h-1zM765 359h1v1h-1zM774 359h1v1h-1zM784 359h1v1h-1zM793 359h1v1h-1zM803 359h1v1h-1zM812 359h1v1h-1zM822 359h1v1h-1zM831 359h1v1h-1zM841 359h1v1h-1zM850 359h1v1h-1zM860 359h1v1h-1zM869 359h1v1h-1zM878 359h1v1h-1zM888 359h1v1h-1zM897 359h1v1h-1zM907 359h1v1h-1zM916 359h1v1h-1zM926 359h1v1h-1zM935 359h1v1h-1zM945 359h1v1h-1zM954 359h1v1h-1zM964 359h1v1h-1zM973 359h1v1h-1zM982 359h1v1h-1zM992 359h1v1h-1zM1001 359h1v1h-1zM1011 359h1v1h-1zM1020 359h1v1h-1zM1030 359h1v1h-1zM1039 359h1v1h-1zM1049 359h1v1h-1zM1058 359h1v1h-1zM1067 359h1v1h-1zM1077 359h1v1h-1zM1086 359h1v1h-1zM1096 359h1v1h-1zM1105 359h1v1h-1zM1115 359h1v1h-1zM1124 359h1v1h-1zM1134 359h1v1h-1zM1143 359h1v1h-1zM1152 359h1v1h-1zM1162 359h1v1h-1zM1171 359h1v1h-1zM1181 359h1v1h-1zM1190 359h1v1h-1zM1200 359h1v1h-1zM500 368h1v1h-1zM510 368h1v1h-1zM519 368h1v1h-1zM529 368h1v1h-1zM538 368h1v1h-1zM548 368h1v1h-1zM557 368h1v1h-1zM567 368h1v1h-1zM576 368h1v1h-1zM586 368h1v1h-1zM595 368h1v1h-1zM604 368h1v1h-1zM614 368h1v1h-1zM623 368h1v1h-1zM633 368h1v1h-1zM642 368h1v1h-1zM652 368h1v1h-1zM661 368h1v1h-1zM671 368h1v1h-1zM680 368h1v1h-1zM689 368h1v1h-1zM699 368h1v1h-1zM708 368h1v1h-1zM718 368h1v1h-1zM727 368h1v1h-1zM737 368h1v1h-1zM746 368h1v1h-1zM756 368h1v1h-1zM765 368h1v1h-1zM774 368h1v1h-1zM784 368h1v1h-1zM793 368h1v1h-1zM803 368h1v1h-1zM812 368h1v1h-1zM822 368h1v1h-1zM831 368h1v1h-1zM841 368h1v1h-1zM850 368h1v1h-1zM860 368h1v1h-1zM869 368h1v1h-1zM878 368h1v1h-1zM888 368h1v1h-1zM897 368h1v1h-1zM907 368h1v1h-1zM916 368h1v1h-1zM926 368h1v1h-1zM935 368h1v1h-1zM945 368h1v1h-1zM954 368h1v1h-1zM964 368h1v1h-1zM973 368h1v1h-1zM982 368h1v1h-1zM992 368h1v1h-1zM1001 368h1v1h-1zM1011 368h1v1h-1zM1020 368h1v1h-1zM1030 368h1v1h-1zM1039 368h1v1h-1zM1049 368h1v1h-1zM1058 368h1v1h-1zM1067 368h1v1h-1zM1077 368h1v1h-1zM1086 368h1v1h-1zM1096 368h1v1h-1zM1105 368h1v1h-1zM1115 368h1v1h-1zM1124 368h1v1h-1zM1134 368h1v1h-1zM1143 368h1v1h-1zM1152 368h1v1h-1zM1162 368h1v1h-1zM1171 368h1v1h-1zM1181 368h1v1h-1zM1190 368h1v1h-1zM1200 368h1v1h-1zM500 378h1v1h-1zM510 378h1v1h-1zM519 378h1v1h-1zM529 378h1v1h-1zM538 378h1v1h-1zM548 378h1v1h-1zM557 378h1v1h-1zM567 378h1v1h-1zM576 378h1v1h-1zM586 378h1v1h-1zM595 378h1v1h-1zM604 378h1v1h-1zM614 378h1v1h-1zM623 378h1v1h-1zM633 378h1v1h-1zM642 378h1v1h-1zM652 378h1v1h-1zM661 378h1v1h-1zM671 378h1v1h-1zM680 378h1v1h-1zM689 378h1v1h-1zM699 378h1v1h-1zM708 378h1v1h-1zM718 378h1v1h-1zM727 378h1v1h-1zM737 378h1v1h-1zM746 378h1v1h-1zM756 378h1v1h-1zM765 378h1v1h-1zM774 378h1v1h-1zM784 378h1v1h-1zM793 378h1v1h-1zM803 378h1v1h-1zM812 378h1v1h-1zM822 378h1v1h-1zM831 378h1v1h-1zM841 378h1v1h-1zM850 378h1v1h-1zM860 378h1v1h-1zM869 378h1v1h-1zM878 378h1v1h-1zM888 378h1v1h-1zM897 378h1v1h-1zM907 378h1v1h-1zM916 378h1v1h-1zM926 378h1v1h-1zM935 378h1v1h-1zM945 378h1v1h-1zM954 378h1v1h-1zM964 378h1v1h-1zM973 378h1v1h-1zM982 378h1v1h-1zM992 378h1v1h-1zM1001 378h1v1h-1zM1011 378h1v1h-1zM1020 378h1v1h-1zM1030 378h1v1h-1zM1039 378h1v1h-1zM1049 378h1v1h-1zM1058 378h1v1h-1zM1067 378h1v1h-1zM1077 378h1v1h-1zM1086 378h1v1h-1zM1096 378h1v1h-1zM1105 378h1v1h-1zM1115 378h1v1h-1zM1124 378h1v1h-1zM1134 378h1v1h-1zM1143 378h1v1h-1zM1152 378h1v1h-1zM1162 378h1v1h-1zM1171 378h1v1h-1zM1181 378h1v1h-1zM1190 378h1v1h-1zM1200 378h1v1h-1zM500 387h1v1h-1zM510 387h1v1h-1zM519 387h1v1h-1zM529 387h1v1h-1zM538 387h1v1h-1zM548 387h1v1h-1zM557 387h1v1h-1zM567 387h1v1h-1zM576 387h1v1h-1zM586 387h1v1h-1zM595 387h1v1h-1zM604 387h1v1h-1zM614 387h1v1h-1zM623 387h1v1h-1zM633 387h1v1h-1zM642 387h1v1h-1zM652 387h1v1h-1zM661 387h1v1h-1zM671 387h1v1h-1zM680 387h1v1h-1zM689 387h1v1h-1zM699 387h1v1h-1zM708 387h1v1h-1zM718 387h1v1h-1zM727 387h1v1h-1zM737 387h1v1h-1zM746 387h1v1h-1zM756 387h1v1h-1zM765 387h1v1h-1zM774 387h1v1h-1zM784 387h1v1h-1zM793 387h1v1h-1zM803 387h1v1h-1zM812 387h1v1h-1zM822 387h1v1h-1zM831 387h1v1h-1zM841 387h1v1h-1zM850 387h1v1h-1zM860 387h1v1h-1zM869 387h1v1h-1zM878 387h1v1h-1zM888 387h1v1h-1zM897 387h1v1h-1zM907 387h1v1h-1zM916 387h1v1h-1zM926 387h1v1h-1zM935 387h1v1h-1zM945 387h1v1h-1zM954 387h1v1h-1zM964 387h1v1h-1zM973 387h1v1h-1zM982 387h1v1h-1zM992 387h1v1h-1zM1001 387h1v1h-1zM1011 387h1v1h-1zM1020 387h1v1h-1zM1030 387h1v1h-1zM1039 387h1v1h-1zM1049 387h1v1h-1zM1058 387h1v1h-1zM1067 387h1v1h-1zM1077 387h1v1h-1zM1086 387h1v1h-1zM1096 387h1v1h-1zM1105 387h1v1h-1zM1115 387h1v1h-1zM1124 387h1v1h-1zM1134 387h1v1h-1zM1143 387h1v1h-1zM1152 387h1v1h-1zM1162 387h1v1h-1zM1171 387h1v1h-1zM1181 387h1v1h-1zM1190 387h1v1h-1zM1200 387h1v1h-1zM500 397h1v1h-1zM510 397h1v1h-1zM519 397h1v1h-1zM529 397h1v1h-1zM538 397h1v1h-1zM548 397h1v1h-1zM557 397h1v1h-1zM567 397h1v1h-1zM576 397h1v1h-1zM586 397h1v1h-1zM595 397h1v1h-1zM604 397h1v1h-1zM614 397h1v1h-1zM623 397h1v1h-1zM633 397h1v1h-1zM642 397h1v1h-1zM652 397h1v1h-1zM661 397h1v1h-1zM671 397h1v1h-1zM680 397h1v1h-1zM689 397h1v1h-1zM699 397h1v1h-1zM708 397h1v1h-1zM718 397h1v1h-1zM727 397h1v1h-1zM737 397h1v1h-1zM746 397h1v1h-1zM756 397h1v1h-1zM765 397h1v1h-1zM774 397h1v1h-1zM784 397h1v1h-1zM793 397h1v1h-1zM803 397h1v1h-1zM812 397h1v1h-1zM822 397h1v1h-1zM831 397h1v1h-1zM841 397h1v1h-1zM850 397h1v1h-1zM860 397h1v1h-1zM869 397h1v1h-1zM878 397h1v1h-1zM888 397h1v1h-1zM897 397h1v1h-1zM907 397h1v1h-1zM916 397h1v1h-1zM926 397h1v1h-1zM935 397h1v1h-1zM945 397h1v1h-1zM954 397h1v1h-1zM964 397h1v1h-1zM973 397h1v1h-1zM982 397h1v1h-1zM992 397h1v1h-1zM1001 397h1v1h-1zM1011 397h1v1h-1zM1020 397h1v1h-1zM1030 397h1v1h-1zM1039 397h1v1h-1zM1049 397h1v1h-1zM1058 397h1v1h-1zM1067 397h1v1h-1zM1077 397h1v1h-1zM1086 397h1v1h-1zM1096 397h1v1h-1zM1105 397h1v1h-1zM1115 397h1v1h-1zM1124 397h1v1h-1zM1134 397h1v1h-1zM1143 397h1v1h-1zM1152 397h1v1h-1zM1162 397h1v1h-1zM1171 397h1v1h-1zM1181 397h1v1h-1zM1190 397h1v1h-1zM1200 397h1v1h-1zM500 410h1v1h-1zM510 410h1v1h-1zM519 410h1v1h-1zM529 410h1v1h-1zM538 410h1v1h-1zM548 410h1v1h-1zM557 410h1v1h-1zM567 410h1v1h-1zM576 410h1v1h-1zM586 410h1v1h-1zM595 410h1v1h-1zM604 410h1v1h-1zM614 410h1v1h-1zM623 410h1v1h-1zM633 410h1v1h-1zM642 410h1v1h-1zM652 410h1v1h-1zM661 410h1v1h-1zM671 410h1v1h-1zM680 410h1v1h-1zM689 410h1v1h-1zM699 410h1v1h-1zM708 410h1v1h-1zM718 410h1v1h-1zM727 410h1v1h-1zM737 410h1v1h-1zM746 410h1v1h-1zM756 410h1v1h-1zM765 410h1v1h-1zM774 410h1v1h-1zM784 410h1v1h-1zM793 410h1v1h-1zM803 410h1v1h-1zM812 410h1v1h-1zM822 410h1v1h-1zM831 410h1v1h-1zM841 410h1v1h-1zM850 410h1v1h-1zM860 410h1v1h-1zM869 410h1v1h-1zM878 410h1v1h-1zM888 410h1v1h-1zM897 410h1v1h-1zM907 410h1v1h-1zM916 410h1v1h-1zM926 410h1v1h-1zM935 410h1v1h-1zM945 410h1v1h-1zM954 410h1v1h-1zM964 410h1v1h-1zM973 410h1v1h-1zM982 410h1v1h-1zM992 410h1v1h-1zM1001 410h1v1h-1zM1011 410h1v1h-1zM1020 410h1v1h-1zM1030 410h1v1h-1zM1039 410h1v1h-1zM1049 410h1v1h-1zM1058 410h1v1h-1zM1067 410h1v1h-1zM1077 410h1v1h-1zM1086 410h1v1h-1zM1096 410h1v1h-1zM1105 410h1v1h-1zM1115 410h1v1h-1zM1124 410h1v1h-1zM1134 410h1v1h-1zM1143 410h1v1h-1zM1152 410h1v1h-1zM1162 410h1v1h-1zM1171 410h1v1h-1zM1181 410h1v1h-1zM1190 410h1v1h-1zM1200 410h1v1h-1zM500 419h1v1h-1zM510 419h1v1h-1zM519 419h1v1h-1zM529 419h1v1h-1zM538 419h1v1h-1zM548 419h1v1h-1zM557 419h1v1h-1zM567 419h1v1h-1zM576 419h1v1h-1zM586 419h1v1h-1zM595 419h1v1h-1zM604 419h1v1h-1zM614 419h1v1h-1zM623 419h1v1h-1zM633 419h1v1h-1zM642 419h1v1h-1zM652 419h1v1h-1zM661 419h1v1h-1zM671 419h1v1h-1zM680 419h1v1h-1zM689 419h1v1h-1zM699 419h1v1h-1zM708 419h1v1h-1zM718 419h1v1h-1zM727 419h1v1h-1zM737 419h1v1h-1zM746 419h1v1h-1zM756 419h1v1h-1zM765 419h1v1h-1zM774 419h1v1h-1zM784 419h1v1h-1zM793 419h1v1h-1zM803 419h1v1h-1zM812 419h1v1h-1zM822 419h1v1h-1zM831 419h1v1h-1zM841 419h1v1h-1zM850 419h1v1h-1zM860 419h1v1h-1zM869 419h1v1h-1zM878 419h1v1h-1zM888 419h1v1h-1zM897 419h1v1h-1zM907 419h1v1h-1zM916 419h1v1h-1zM926 419h1v1h-1zM935 419h1v1h-1zM945 419h1v1h-1zM954 419h1v1h-1zM964 419h1v1h-1zM973 419h1v1h-1zM982 419h1v1h-1zM992 419h1v1h-1zM1001 419h1v1h-1zM1011 419h1v1h-1zM1020 419h1v1h-1zM1030 419h1v1h-1zM1039 419h1v1h-1zM1049 419h1v1h-1zM1058 419h1v1h-1zM1067 419h1v1h-1zM1077 419h1v1h-1zM1086 419h1v1h-1zM1096 419h1v1h-1zM1105 419h1v1h-1zM1115 419h1v1h-1zM1124 419h1v1h-1zM1134 419h1v1h-1zM1143 419h1v1h-1zM1152 419h1v1h-1zM1162 419h1v1h-1zM1171 419h1v1h-1zM1181 419h1v1h-1zM1190 419h1v1h-1zM1200 419h1v1h-1zM500 429h1v1h-1zM510 429h1v1h-1zM519 429h1v1h-1zM529 429h1v1h-1zM538 429h1v1h-1zM548 429h1v1h-1zM557 429h1v1h-1zM567 429h1v1h-1zM576 429h1v1h-1zM586 429h1v1h-1zM595 429h1v1h-1zM604 429h1v1h-1zM614 429h1v1h-1zM623 429h1v1h-1zM633 429h1v1h-1zM642 429h1v1h-1zM652 429h1v1h-1zM661 429h1v1h-1zM671 429h1v1h-1zM680 429h1v1h-1zM689 429h1v1h-1zM699 429h1v1h-1zM708 429h1v1h-1zM718 429h1v1h-1zM727 429h1v1h-1zM737 429h1v1h-1zM746 429h1v1h-1zM756 429h1v1h-1zM765 429h1v1h-1zM774 429h1v1h-1zM784 429h1v1h-1zM793 429h1v1h-1zM803 429h1v1h-1zM812 429h1v1h-1zM822 429h1v1h-1zM831 429h1v1h-1zM841 429h1v1h-1zM850 429h1v1h-1zM860 429h1v1h-1zM869 429h1v1h-1zM878 429h1v1h-1zM888 429h1v1h-1zM897 429h1v1h-1zM907 429h1v1h-1zM916 429h1v1h-1zM926 429h1v1h-1zM935 429h1v1h-1zM945 429h1v1h-1zM954 429h1v1h-1zM964 429h1v1h-1zM973 429h1v1h-1zM982 429h1v1h-1zM992 429h1v1h-1zM1001 429h1v1h-1zM1011 429h1v1h-1zM1020 429h1v1h-1zM1030 429h1v1h-1zM1039 429h1v1h-1zM1049 429h1v1h-1zM1058 429h1v1h-1zM1067 429h1v1h-1zM1077 429h1v1h-1zM1086 429h1v1h-1zM1096 429h1v1h-1zM1105 429h1v1h-1zM1115 429h1v1h-1zM1124 429h1v1h-1zM1134 429h1v1h-1zM1143 429h1v1h-1zM1152 429h1v1h-1zM1162 429h1v1h-1zM1171 429h1v1h-1zM1181 429h1v1h-1zM1190 429h1v1h-1zM1200 429h1v1h-1zM500 438h1v1h-1zM510 438h1v1h-1zM519 438h1v1h-1zM529 438h1v1h-1zM538 438h1v1h-1zM548 438h1v1h-1zM557 438h1v1h-1zM567 438h1v1h-1zM576 438h1v1h-1zM586 438h1v1h-1zM595 438h1v1h-1zM604 438h1v1h-1zM614 438h1v1h-1zM623 438h1v1h-1zM633 438h1v1h-1zM642 438h1v1h-1zM652 438h1v1h-1zM661 438h1v1h-1zM671 438h1v1h-1zM680 438h1v1h-1zM689 438h1v1h-1zM699 438h1v1h-1zM708 438h1v1h-1zM718 438h1v1h-1zM727 438h1v1h-1zM737 438h1v1h-1zM746 438h1v1h-1zM756 438h1v1h-1zM765 438h1v1h-1zM774 438h1v1h-1zM784 438h1v1h-1zM793 438h1v1h-1zM803 438h1v1h-1zM812 438h1v1h-1zM822 438h1v1h-1zM831 438h1v1h-1zM841 438h1v1h-1zM850 438h1v1h-1zM860 438h1v1h-1zM869 438h1v1h-1zM878 438h1v1h-1zM888 438h1v1h-1zM897 438h1v1h-1zM907 438h1v1h-1zM916 438h1v1h-1zM926 438h1v1h-1zM935 438h1v1h-1zM945 438h1v1h-1zM954 438h1v1h-1zM964 438h1v1h-1zM973 438h1v1h-1zM982 438h1v1h-1zM992 438h1v1h-1zM1001 438h1v1h-1zM1011 438h1v1h-1zM1020 438h1v1h-1zM1030 438h1v1h-1zM1039 438h1v1h-1zM1049 438h1v1h-1zM1058 438h1v1h-1zM1067 438h1v1h-1zM1077 438h1v1h-1zM1086 438h1v1h-1zM1096 438h1v1h-1zM1105 438h1v1h-1zM1115 438h1v1h-1zM1124 438h1v1h-1zM1134 438h1v1h-1zM1143 438h1v1h-1zM1152 438h1v1h-1zM1162 438h1v1h-1zM1171 438h1v1h-1zM1181 438h1v1h-1zM1190 438h1v1h-1zM1200 438h1v1h-1zM500 448h1v1h-1zM510 448h1v1h-1zM519 448h1v1h-1zM529 448h1v1h-1zM538 448h1v1h-1zM548 448h1v1h-1zM557 448h1v1h-1zM567 448h1v1h-1zM576 448h1v1h-1zM586 448h1v1h-1zM595 448h1v1h-1zM604 448h1v1h-1zM614 448h1v1h-1zM623 448h1v1h-1zM633 448h1v1h-1zM642 448h1v1h-1zM652 448h1v1h-1zM661 448h1v1h-1zM671 448h1v1h-1zM680 448h1v1h-1zM689 448h1v1h-1zM699 448h1v1h-1zM708 448h1v1h-1zM718 448h1v1h-1zM727 448h1v1h-1zM737 448h1v1h-1zM746 448h1v1h-1zM756 448h1v1h-1zM765 448h1v1h-1zM774 448h1v1h-1zM784 448h1v1h-1zM793 448h1v1h-1zM803 448h1v1h-1zM812 448h1v1h-1zM822 448h1v1h-1zM831 448h1v1h-1zM841 448h1v1h-1zM850 448h1v1h-1zM860 448h1v1h-1zM869 448h1v1h-1zM878 448h1v1h-1zM888 448h1v1h-1zM897 448h1v1h-1zM907 448h1v1h-1zM916 448h1v1h-1zM926 448h1v1h-1zM935 448h1v1h-1zM945 448h1v1h-1zM954 448h1v1h-1zM964 448h1v1h-1zM973 448h1v1h-1zM982 448h1v1h-1zM992 448h1v1h-1zM1001 448h1v1h-1zM1011 448h1v1h-1zM1020 448h1v1h-1zM1030 448h1v1h-1zM1039 448h1v1h-1zM1049 448h1v1h-1zM1058 448h1v1h-1zM1067 448h1v1h-1zM1077 448h1v1h-1zM1086 448h1v1h-1zM1096 448h1v1h-1zM1105 448h1v1h-1zM1115 448h1v1h-1zM1124 448h1v1h-1zM1134 448h1v1h-1zM1143 448h1v1h-1zM1152 448h1v1h-1zM1162 448h1v1h-1zM1171 448h1v1h-1zM1181 448h1v1h-1zM1190 448h1v1h-1zM1200 448h1v1h-1zM500 457h1v1h-1zM510 457h1v1h-1zM519 457h1v1h-1zM529 457h1v1h-1zM538 457h1v1h-1zM548 457h1v1h-1zM557 457h1v1h-1zM567 457h1v1h-1zM576 457h1v1h-1zM586 457h1v1h-1zM595 457h1v1h-1zM604 457h1v1h-1zM614 457h1v1h-1zM623 457h1v1h-1zM633 457h1v1h-1zM642 457h1v1h-1zM652 457h1v1h-1zM661 457h1v1h-1zM671 457h1v1h-1zM680 457h1v1h-1zM689 457h1v1h-1zM699 457h1v1h-1zM708 457h1v1h-1zM718 457h1v1h-1zM727 457h1v1h-1zM737 457h1v1h-1zM746 457h1v1h-1zM756 457h1v1h-1zM765 457h1v1h-1zM774 457h1v1h-1zM784 457h1v1h-1zM793 457h1v1h-1zM803 457h1v1h-1zM812 457h1v1h-1zM822 457h1v1h-1zM831 457h1v1h-1zM841 457h1v1h-1zM850 457h1v1h-1zM860 457h1v1h-1zM869 457h1v1h-1zM878 457h1v1h-1zM888 457h1v1h-1zM897 457h1v1h-1zM907 457h1v1h-1zM916 457h1v1h-1zM926 457h1v1h-1zM935 457h1v1h-1zM945 457h1v1h-1zM954 457h1v1h-1zM964 457h1v1h-1zM973 457h1v1h-1zM982 457h1v1h-1zM992 457h1v1h-1zM1001 457h1v1h-1zM1011 457h1v1h-1zM1020 457h1v1h-1zM1030 457h1v1h-1zM1039 457h1v1h-1zM1049 457h1v1h-1zM1058 457h1v1h-1zM1067 457h1v1h-1zM1077 457h1v1h-1zM1086 457h1v1h-1zM1096 457h1v1h-1zM1105 457h1v1h-1zM1115 457h1v1h-1zM1124 457h1v1h-1zM1134 457h1v1h-1zM1143 457h1v1h-1zM1152 457h1v1h-1zM1162 457h1v1h-1zM1171 457h1v1h-1zM1181 457h1v1h-1zM1190 457h1v1h-1zM1200 457h1v1h-1zM500 467h1v1h-1zM510 467h1v1h-1zM519 467h1v1h-1zM529 467h1v1h-1zM538 467h1v1h-1zM548 467h1v1h-1zM557 467h1v1h-1zM567 467h1v1h-1zM576 467h1v1h-1zM586 467h1v1h-1zM595 467h1v1h-1zM604 467h1v1h-1zM614 467h1v1h-1zM623 467h1v1h-1zM633 467h1v1h-1zM642 467h1v1h-1zM652 467h1v1h-1zM661 467h1v1h-1zM671 467h1v1h-1zM680 467h1v1h-1zM689 467h1v1h-1zM699 467h1v1h-1zM708 467h1v1h-1zM718 467h1v1h-1zM727 467h1v1h-1zM737 467h1v1h-1zM746 467h1v1h-1zM756 467h1v1h-1zM765 467h1v1h-1zM774 467h1v1h-1zM784 467h1v1h-1zM793 467h1v1h-1zM803 467h1v1h-1zM812 467h1v1h-1zM822 467h1v1h-1zM831 467h1v1h-1zM841 467h1v1h-1zM850 467h1v1h-1zM860 467h1v1h-1zM869 467h1v1h-1zM878 467h1v1h-1zM888 467h1v1h-1zM897 467h1v1h-1zM907 467h1v1h-1zM916 467h1v1h-1zM926 467h1v1h-1zM935 467h1v1h-1zM945 467h1v1h-1zM954 467h1v1h-1zM964 467h1v1h-1zM973 467h1v1h-1zM982 467h1v1h-1zM992 467h1v1h-1zM1001 467h1v1h-1zM1011 467h1v1h-1zM1020 467h1v1h-1zM1030 467h1v1h-1zM1039 467h1v1h-1zM1049 467h1v1h-1zM1058 467h1v1h-1zM1067 467h1v1h-1zM1077 467h1v1h-1zM1086 467h1v1h-1zM1096 467h1v1h-1zM1105 467h1v1h-1zM1115 467h1v1h-1zM1124 467h1v1h-1zM1134 467h1v1h-1zM1143 467h1v1h-1zM1152 467h1v1h-1zM1162 467h1v1h-1zM1171 467h1v1h-1zM1181 467h1v1h-1zM1190 467h1v1h-1zM1200 467h1v1h-1zM500 476h1v1h-1zM510 476h1v1h-1zM519 476h1v1h-1zM529 476h1v1h-1zM538 476h1v1h-1zM548 476h1v1h-1zM557 476h1v1h-1zM567 476h1v1h-1zM576 476h1v1h-1zM586 476h1v1h-1zM595 476h1v1h-1zM604 476h1v1h-1zM614 476h1v1h-1zM623 476h1v1h-1zM633 476h1v1h-1zM642 476h1v1h-1zM652 476h1v1h-1zM661 476h1v1h-1zM671 476h1v1h-1zM680 476h1v1h-1zM689 476h1v1h-1zM699 476h1v1h-1zM708 476h1v1h-1zM718 476h1v1h-1zM727 476h1v1h-1zM737 476h1v1h-1zM746 476h1v1h-1zM756 476h1v1h-1zM765 476h1v1h-1zM774 476h1v1h-1zM784 476h1v1h-1zM793 476h1v1h-1zM803 476h1v1h-1zM812 476h1v1h-1zM822 476h1v1h-1zM831 476h1v1h-1zM841 476h1v1h-1zM850 476h1v1h-1zM860 476h1v1h-1zM869 476h1v1h-1zM878 476h1v1h-1zM888 476h1v1h-1zM897 476h1v1h-1zM907 476h1v1h-1zM916 476h1v1h-1zM926 476h1v1h-1zM935 476h1v1h-1zM945 476h1v1h-1zM954 476h1v1h-1zM964 476h1v1h-1zM973 476h1v1h-1zM982 476h1v1h-1zM992 476h1v1h-1zM1001 476h1v1h-1zM1011 476h1v1h-1zM1020 476h1v1h-1zM1030 476h1v1h-1zM1039 476h1v1h-1zM1049 476h1v1h-1zM1058 476h1v1h-1zM1067 476h1v1h-1zM1077 476h1v1h-1zM1086 476h1v1h-1zM1096 476h1v1h-1zM1105 476h1v1h-1zM1115 476h1v1h-1zM1124 476h1v1h-1zM1134 476h1v1h-1zM1143 476h1v1h-1zM1152 476h1v1h-1zM1162 476h1v1h-1zM1171 476h1v1h-1zM1181 476h1v1h-1zM1190 476h1v1h-1zM1200 476h1v1h-1zM500 486h1v1h-1zM510 486h1v1h-1zM519 486h1v1h-1zM529 486h1v1h-1zM538 486h1v1h-1zM548 486h1v1h-1zM557 486h1v1h-1zM567 486h1v1h-1zM576 486h1v1h-1zM586 486h1v1h-1zM595 486h1v1h-1zM604 486h1v1h-1zM614 486h1v1h-1zM623 486h1v1h-1zM633 486h1v1h-1zM642 486h1v1h-1zM652 486h1v1h-1zM661 486h1v1h-1zM671 486h1v1h-1zM680 486h1v1h-1zM689 486h1v1h-1zM699 486h1v1h-1zM708 486h1v1h-1zM718 486h1v1h-1zM727 486h1v1h-1zM737 486h1v1h-1zM746 486h1v1h-1zM756 486h1v1h-1zM765 486h1v1h-1zM774 486h1v1h-1zM784 486h1v1h-1zM793 486h1v1h-1zM803 486h1v1h-1zM812 486h1v1h-1zM822 486h1v1h-1zM831 486h1v1h-1zM841 486h1v1h-1zM850 486h1v1h-1zM860 486h1v1h-1zM869 486h1v1h-1zM878 486h1v1h-1zM888 486h1v1h-1zM897 486h1v1h-1zM907 486h1v1h-1zM916 486h1v1h-1zM926 486h1v1h-1zM935 486h1v1h-1zM945 486h1v1h-1zM954 486h1v1h-1zM964 486h1v1h-1zM973 486h1v1h-1zM982 486h1v1h-1zM992 486h1v1h-1zM1001 486h1v1h-1zM1011 486h1v1h-1zM1020 486h1v1h-1zM1030 486h1v1h-1zM1039 486h1v1h-1zM1049 486h1v1h-1zM1058 486h1v1h-1zM1067 486h1v1h-1zM1077 486h1v1h-1zM1086 486h1v1h-1zM1096 486h1v1h-1zM1105 486h1v1h-1zM1115 486h1v1h-1zM1124 486h1v1h-1zM1134 486h1v1h-1zM1143 486h1v1h-1zM1152 486h1v1h-1zM1162 486h1v1h-1zM1171 486h1v1h-1zM1181 486h1v1h-1zM1190 486h1v1h-1zM1200 486h1v1h-1zM500 495h1v1h-1zM510 495h1v1h-1zM519 495h1v1h-1zM529 495h1v1h-1zM538 495h1v1h-1zM548 495h1v1h-1zM557 495h1v1h-1zM567 495h1v1h-1zM576 495h1v1h-1zM586 495h1v1h-1zM595 495h1v1h-1zM604 495h1v1h-1zM614 495h1v1h-1zM623 495h1v1h-1zM633 495h1v1h-1zM642 495h1v1h-1zM652 495h1v1h-1zM661 495h1v1h-1zM671 495h1v1h-1zM680 495h1v1h-1zM689 495h1v1h-1zM699 495h1v1h-1zM708 495h1v1h-1zM718 495h1v1h-1zM727 495h1v1h-1zM737 495h1v1h-1zM746 495h1v1h-1zM756 495h1v1h-1zM765 495h1v1h-1zM774 495h1v1h-1zM784 495h1v1h-1zM793 495h1v1h-1zM803 495h1v1h-1zM812 495h1v1h-1zM822 495h1v1h-1zM831 495h1v1h-1zM841 495h1v1h-1zM850 495h1v1h-1zM860 495h1v1h-1zM869 495h1v1h-1zM878 495h1v1h-1zM888 495h1v1h-1zM897 495h1v1h-1zM907 495h1v1h-1zM916 495h1v1h-1zM926 495h1v1h-1zM935 495h1v1h-1zM945 495h1v1h-1zM954 495h1v1h-1zM964 495h1v1h-1zM973 495h1v1h-1zM982 495h1v1h-1zM992 495h1v1h-1zM1001 495h1v1h-1zM1011 495h1v1h-1zM1020 495h1v1h-1zM1030 495h1v1h-1zM1039 495h1v1h-1zM1049 495h1v1h-1zM1058 495h1v1h-1zM1067 495h1v1h-1zM1077 495h1v1h-1zM1086 495h1v1h-1zM1096 495h1v1h-1zM1105 495h1v1h-1zM1115 495h1v1h-1zM1124 495h1v1h-1zM1134 495h1v1h-1zM1143 495h1v1h-1zM1152 495h1v1h-1zM1162 495h1v1h-1zM1171 495h1v1h-1zM1181 495h1v1h-1zM1190 495h1v1h-1zM1200 495h1v1h-1zM500 513h1v1h-1zM510 513h1v1h-1zM519 513h1v1h-1zM529 513h1v1h-1zM538 513h1v1h-1zM548 513h1v1h-1zM557 513h1v1h-1zM567 513h1v1h-1zM576 513h1v1h-1zM586 513h1v1h-1zM595 513h1v1h-1zM604 513h1v1h-1zM614 513h1v1h-1zM623 513h1v1h-1zM633 513h1v1h-1zM642 513h1v1h-1zM652 513h1v1h-1zM661 513h1v1h-1zM671 513h1v1h-1zM680 513h1v1h-1zM689 513h1v1h-1zM699 513h1v1h-1zM708 513h1v1h-1zM718 513h1v1h-1zM727 513h1v1h-1zM737 513h1v1h-1zM746 513h1v1h-1zM756 513h1v1h-1zM765 513h1v1h-1zM774 513h1v1h-1zM784 513h1v1h-1zM793 513h1v1h-1zM803 513h1v1h-1zM812 513h1v1h-1zM822 513h1v1h-1zM831 513h1v1h-1zM841 513h1v1h-1zM850 513h1v1h-1zM860 513h1v1h-1zM869 513h1v1h-1zM878 513h1v1h-1zM888 513h1v1h-1zM897 513h1v1h-1zM907 513h1v1h-1zM916 513h1v1h-1zM926 513h1v1h-1zM935 513h1v1h-1zM945 513h1v1h-1zM954 513h1v1h-1zM964 513h1v1h-1zM973 513h1v1h-1zM982 513h1v1h-1zM992 513h1v1h-1zM1001 513h1v1h-1zM1011 513h1v1h-1zM1020 513h1v1h-1zM1030 513h1v1h-1zM1039 513h1v1h-1zM1049 513h1v1h-1zM1058 513h1v1h-1zM1067 513h1v1h-1zM1077 513h1v1h-1zM1086 513h1v1h-1zM1096 513h1v1h-1zM1105 513h1v1h-1zM1115 513h1v1h-1zM1124 513h1v1h-1zM1134 513h1v1h-1zM1143 513h1v1h-1zM1152 513h1v1h-1zM1162 513h1v1h-1zM1171 513h1v1h-1zM1181 513h1v1h-1zM1190 513h1v1h-1zM1200 513h1v1h-1zM500 522h1v1h-1zM510 522h1v1h-1zM519 522h1v1h-1zM529 522h1v1h-1zM538 522h1v1h-1zM548 522h1v1h-1zM557 522h1v1h-1zM567 522h1v1h-1zM576 522h1v1h-1zM586 522h1v1h-1zM595 522h1v1h-1zM604 522h1v1h-1zM614 522h1v1h-1zM623 522h1v1h-1zM633 522h1v1h-1zM642 522h1v1h-1zM652 522h1v1h-1zM661 522h1v1h-1zM671 522h1v1h-1zM680 522h1v1h-1zM689 522h1v1h-1zM699 522h1v1h-1zM708 522h1v1h-1zM718 522h1v1h-1zM727 522h1v1h-1zM737 522h1v1h-1zM746 522h1v1h-1zM756 522h1v1h-1zM765 522h1v1h-1zM774 522h1v1h-1zM784 522h1v1h-1zM793 522h1v1h-1zM803 522h1v1h-1zM812 522h1v1h-1zM822 522h1v1h-1zM831 522h1v1h-1zM841 522h1v1h-1zM850 522h1v1h-1zM860 522h1v1h-1zM869 522h1v1h-1zM878 522h1v1h-1zM888 522h1v1h-1zM897 522h1v1h-1zM907 522h1v1h-1zM916 522h1v1h-1zM926 522h1v1h-1zM935 522h1v1h-1zM945 522h1v1h-1zM954 522h1v1h-1zM964 522h1v1h-1zM973 522h1v1h-1zM982 522h1v1h-1zM992 522h1v1h-1zM1001 522h1v1h-1zM1011 522h1v1h-1zM1020 522h1v1h-1zM1030 522h1v1h-1zM1039 522h1v1h-1zM1049 522h1v1h-1zM1058 522h1v1h-1zM1067 522h1v1h-1zM1077 522h1v1h-1zM1086 522h1v1h-1zM1096 522h1v1h-1zM1105 522h1v1h-1zM1115 522h1v1h-1zM1124 522h1v1h-1zM1134 522h1v1h-1zM1143 522h1v1h-1zM1152 522h1v1h-1zM1162 522h1v1h-1zM1171 522h1v1h-1zM1181 522h1v1h-1zM1190 522h1v1h-1zM1200 522h1v1h-1zM500 532h1v1h-1zM510 532h1v1h-1zM519 532h1v1h-1zM529 532h1v1h-1zM538 532h1v1h-1zM548 532h1v1h-1zM557 532h1v1h-1zM567 532h1v1h-1zM576 532h1v1h-1zM586 532h1v1h-1zM595 532h1v1h-1zM604 532h1v1h-1zM614 532h1v1h-1zM623 532h1v1h-1zM633 532h1v1h-1zM642 532h1v1h-1zM652 532h1v1h-1zM661 532h1v1h-1zM671 532h1v1h-1zM680 532h1v1h-1zM689 532h1v1h-1zM699 532h1v1h-1zM708 532h1v1h-1zM718 532h1v1h-1zM727 532h1v1h-1zM737 532h1v1h-1zM746 532h1v1h-1zM756 532h1v1h-1zM765 532h1v1h-1zM774 532h1v1h-1zM784 532h1v1h-1zM793 532h1v1h-1zM803 532h1v1h-1zM812 532h1v1h-1zM822 532h1v1h-1zM831 532h1v1h-1zM841 532h1v1h-1zM850 532h1v1h-1zM860 532h1v1h-1zM869 532h1v1h-1zM878 532h1v1h-1zM888 532h1v1h-1zM897 532h1v1h-1zM907 532h1v1h-1zM916 532h1v1h-1zM926 532h1v1h-1zM935 532h1v1h-1zM945 532h1v1h-1zM954 532h1v1h-1zM964 532h1v1h-1zM973 532h1v1h-1zM982 532h1v1h-1zM992 532h1v1h-1zM1001 532h1v1h-1zM1011 532h1v1h-1zM1020 532h1v1h-1zM1030 532h1v1h-1zM1039 532h1v1h-1zM1049 532h1v1h-1zM1058 532h1v1h-1zM1067 532h1v1h-1zM1077 532h1v1h-1zM1086 532h1v1h-1zM1096 532h1v1h-1zM1105 532h1v1h-1zM1115 532h1v1h-1zM1124 532h1v1h-1zM1134 532h1v1h-1zM1143 532h1v1h-1zM1152 532h1v1h-1zM1162 532h1v1h-1zM1171 532h1v1h-1zM1181 532h1v1h-1zM1190 532h1v1h-1zM1200 532h1v1h-1zM500 541h1v1h-1zM510 541h1v1h-1zM519 541h1v1h-1zM529 541h1v1h-1zM538 541h1v1h-1zM548 541h1v1h-1zM557 541h1v1h-1zM567 541h1v1h-1zM576 541h1v1h-1zM586 541h1v1h-1zM595 541h1v1h-1zM604 541h1v1h-1zM614 541h1v1h-1zM623 541h1v1h-1zM633 541h1v1h-1zM642 541h1v1h-1zM652 541h1v1h-1zM661 541h1v1h-1zM671 541h1v1h-1zM680 541h1v1h-1zM689 541h1v1h-1zM699 541h1v1h-1zM708 541h1v1h-1zM718 541h1v1h-1zM727 541h1v1h-1zM737 541h1v1h-1zM746 541h1v1h-1zM756 541h1v1h-1zM765 541h1v1h-1zM774 541h1v1h-1zM784 541h1v1h-1zM793 541h1v1h-1zM803 541h1v1h-1zM812 541h1v1h-1zM822 541h1v1h-1zM831 541h1v1h-1zM841 541h1v1h-1zM850 541h1v1h-1zM860 541h1v1h-1zM869 541h1v1h-1zM878 541h1v1h-1zM888 541h1v1h-1zM897 541h1v1h-1zM907 541h1v1h-1zM916 541h1v1h-1zM926 541h1v1h-1zM935 541h1v1h-1zM945 541h1v1h-1zM954 541h1v1h-1zM964 541h1v1h-1zM973 541h1v1h-1zM982 541h1v1h-1zM992 541h1v1h-1zM1001 541h1v1h-1zM1011 541h1v1h-1zM1020 541h1v1h-1zM1030 541h1v1h-1zM1039 541h1v1h-1zM1049 541h1v1h-1zM1058 541h1v1h-1zM1067 541h1v1h-1zM1077 541h1v1h-1zM1086 541h1v1h-1zM1096 541h1v1h-1zM1105 541h1v1h-1zM1115 541h1v1h-1zM1124 541h1v1h-1zM1134 541h1v1h-1zM1143 541h1v1h-1zM1152 541h1v1h-1zM1162 541h1v1h-1zM1171 541h1v1h-1zM1181 541h1v1h-1zM1190 541h1v1h-1zM1200 541h1v1h-1zM500 551h1v1h-1zM510 551h1v1h-1zM519 551h1v1h-1zM529 551h1v1h-1zM538 551h1v1h-1zM548 551h1v1h-1zM557 551h1v1h-1zM567 551h1v1h-1zM576 551h1v1h-1zM586 551h1v1h-1zM595 551h1v1h-1zM604 551h1v1h-1zM614 551h1v1h-1zM623 551h1v1h-1zM633 551h1v1h-1zM642 551h1v1h-1zM652 551h1v1h-1zM661 551h1v1h-1zM671 551h1v1h-1zM680 551h1v1h-1zM689 551h1v1h-1zM699 551h1v1h-1zM708 551h1v1h-1zM718 551h1v1h-1zM727 551h1v1h-1zM737 551h1v1h-1zM746 551h1v1h-1zM756 551h1v1h-1zM765 551h1v1h-1zM774 551h1v1h-1zM784 551h1v1h-1zM793 551h1v1h-1zM803 551h1v1h-1zM812 551h1v1h-1zM822 551h1v1h-1zM831 551h1v1h-1zM841 551h1v1h-1zM850 551h1v1h-1zM860 551h1v1h-1zM869 551h1v1h-1zM878 551h1v1h-1zM888 551h1v1h-1zM897 551h1v1h-1zM907 551h1v1h-1zM916 551h1v1h-1zM926 551h1v1h-1zM935 551h1v1h-1zM945 551h1v1h-1zM954 551h1v1h-1zM964 551h1v1h-1zM973 551h1v1h-1zM982 551h1v1h-1zM992 551h1v1h-1zM1001 551h1v1h-1zM1011 551h1v1h-1zM1020 551h1v1h-1zM1030 551h1v1h-1zM1039 551h1v1h-1zM1049 551h1v1h-1zM1058 551h1v1h-1zM1067 551h1v1h-1zM1077 551h1v1h-1zM1086 551h1v1h-1zM1096 551h1v1h-1zM1105 551h1v1h-1zM1115 551h1v1h-1zM1124 551h1v1h-1zM1134 551h1v1h-1zM1143 551h1v1h-1zM1152 551h1v1h-1zM1162 551h1v1h-1zM1171 551h1v1h-1zM1181 551h1v1h-1zM1190 551h1v1h-1zM1200 551h1v1h-1zM500 561h1v1h-1zM510 561h1v1h-1zM519 561h1v1h-1zM529 561h1v1h-1zM538 561h1v1h-1zM548 561h1v1h-1zM557 561h1v1h-1zM567 561h1v1h-1zM576 561h1v1h-1zM586 561h1v1h-1zM595 561h1v1h-1zM604 561h1v1h-1zM614 561h1v1h-1zM623 561h1v1h-1zM633 561h1v1h-1zM642 561h1v1h-1zM652 561h1v1h-1zM661 561h1v1h-1zM671 561h1v1h-1zM680 561h1v1h-1zM689 561h1v1h-1zM699 561h1v1h-1zM708 561h1v1h-1zM718 561h1v1h-1zM727 561h1v1h-1zM737 561h1v1h-1zM746 561h1v1h-1zM756 561h1v1h-1zM765 561h1v1h-1zM774 561h1v1h-1zM784 561h1v1h-1zM793 561h1v1h-1zM803 561h1v1h-1zM812 561h1v1h-1zM822 561h1v1h-1zM831 561h1v1h-1zM841 561h1v1h-1zM850 561h1v1h-1zM860 561h1v1h-1zM869 561h1v1h-1zM878 561h1v1h-1zM888 561h1v1h-1zM897 561h1v1h-1zM907 561h1v1h-1zM916 561h1v1h-1zM926 561h1v1h-1zM935 561h1v1h-1zM945 561h1v1h-1zM954 561h1v1h-1zM964 561h1v1h-1zM973 561h1v1h-1zM982 561h1v1h-1zM992 561h1v1h-1zM1001 561h1v1h-1zM1011 561h1v1h-1zM1020 561h1v1h-1zM1030 561h1v1h-1zM1039 561h1v1h-1zM1049 561h1v1h-1zM1058 561h1v1h-1zM1067 561h1v1h-1zM1077 561h1v1h-1zM1086 561h1v1h-1zM1096 561h1v1h-1zM1105 561h1v1h-1zM1115 561h1v1h-1zM1124 561h1v1h-1zM1134 561h1v1h-1zM1143 561h1v1h-1zM1152 561h1v1h-1zM1162 561h1v1h-1zM1171 561h1v1h-1zM1181 561h1v1h-1zM1190 561h1v1h-1zM1200 561h1v1h-1zM500 570h1v1h-1zM510 570h1v1h-1zM519 570h1v1h-1zM529 570h1v1h-1zM538 570h1v1h-1zM548 570h1v1h-1zM557 570h1v1h-1zM567 570h1v1h-1zM576 570h1v1h-1zM586 570h1v1h-1zM595 570h1v1h-1zM604 570h1v1h-1zM614 570h1v1h-1zM623 570h1v1h-1zM633 570h1v1h-1zM642 570h1v1h-1zM652 570h1v1h-1zM661 570h1v1h-1zM671 570h1v1h-1zM680 570h1v1h-1zM689 570h1v1h-1zM699 570h1v1h-1zM708 570h1v1h-1zM718 570h1v1h-1zM727 570h1v1h-1zM737 570h1v1h-1zM746 570h1v1h-1zM756 570h1v1h-1zM765 570h1v1h-1zM774 570h1v1h-1zM784 570h1v1h-1zM793 570h1v1h-1zM803 570h1v1h-1zM812 570h1v1h-1zM822 570h1v1h-1zM831 570h1v1h-1zM841 570h1v1h-1zM850 570h1v1h-1zM860 570h1v1h-1zM869 570h1v1h-1zM878 570h1v1h-1zM888 570h1v1h-1zM897 570h1v1h-1zM907 570h1v1h-1zM916 570h1v1h-1zM926 570h1v1h-1zM935 570h1v1h-1zM945 570h1v1h-1zM954 570h1v1h-1zM964 570h1v1h-1zM973 570h1v1h-1zM982 570h1v1h-1zM992 570h1v1h-1zM1001 570h1v1h-1zM1011 570h1v1h-1zM1020 570h1v1h-1zM1030 570h1v1h-1zM1039 570h1v1h-1zM1049 570h1v1h-1zM1058 570h1v1h-1zM1067 570h1v1h-1zM1077 570h1v1h-1zM1086 570h1v1h-1zM1096 570h1v1h-1zM1105 570h1v1h-1zM1115 570h1v1h-1zM1124 570h1v1h-1zM1134 570h1v1h-1zM1143 570h1v1h-1zM1152 570h1v1h-1zM1162 570h1v1h-1zM1171 570h1v1h-1zM1181 570h1v1h-1zM1190 570h1v1h-1zM1200 570h1v1h-1zM500 580h1v1h-1zM510 580h1v1h-1zM519 580h1v1h-1zM529 580h1v1h-1zM538 580h1v1h-1zM548 580h1v1h-1zM557 580h1v1h-1zM567 580h1v1h-1zM576 580h1v1h-1zM586 580h1v1h-1zM595 580h1v1h-1zM604 580h1v1h-1zM614 580h1v1h-1zM623 580h1v1h-1zM633 580h1v1h-1zM642 580h1v1h-1zM652 580h1v1h-1zM661 580h1v1h-1zM671 580h1v1h-1zM680 580h1v1h-1zM689 580h1v1h-1zM699 580h1v1h-1zM708 580h1v1h-1zM718 580h1v1h-1zM727 580h1v1h-1zM737 580h1v1h-1zM746 580h1v1h-1zM756 580h1v1h-1zM765 580h1v1h-1zM774 580h1v1h-1zM784 580h1v1h-1zM793 580h1v1h-1zM803 580h1v1h-1zM812 580h1v1h-1zM822 580h1v1h-1zM831 580h1v1h-1zM841 580h1v1h-1zM850 580h1v1h-1zM860 580h1v1h-1zM869 580h1v1h-1zM878 580h1v1h-1zM888 580h1v1h-1zM897 580h1v1h-1zM907 580h1v1h-1zM916 580h1v1h-1zM926 580h1v1h-1zM935 580h1v1h-1zM945 580h1v1h-1zM954 580h1v1h-1zM964 580h1v1h-1zM973 580h1v1h-1zM982 580h1v1h-1zM992 580h1v1h-1zM1001 580h1v1h-1zM1011 580h1v1h-1zM1020 580h1v1h-1zM1030 580h1v1h-1zM1039 580h1v1h-1zM1049 580h1v1h-1zM1058 580h1v1h-1zM1067 580h1v1h-1zM1077 580h1v1h-1zM1086 580h1v1h-1zM1096 580h1v1h-1zM1105 580h1v1h-1zM1115 580h1v1h-1zM1124 580h1v1h-1zM1134 580h1v1h-1zM1143 580h1v1h-1zM1152 580h1v1h-1zM1162 580h1v1h-1zM1171 580h1v1h-1zM1181 580h1v1h-1zM1190 580h1v1h-1zM1200 580h1v1h-1zM500 589h1v1h-1zM510 589h1v1h-1zM519 589h1v1h-1zM529 589h1v1h-1zM538 589h1v1h-1zM548 589h1v1h-1zM557 589h1v1h-1zM567 589h1v1h-1zM576 589h1v1h-1zM586 589h1v1h-1zM595 589h1v1h-1zM604 589h1v1h-1zM614 589h1v1h-1zM623 589h1v1h-1zM633 589h1v1h-1zM642 589h1v1h-1zM652 589h1v1h-1zM661 589h1v1h-1zM671 589h1v1h-1zM680 589h1v1h-1zM689 589h1v1h-1zM699 589h1v1h-1zM708 589h1v1h-1zM718 589h1v1h-1zM727 589h1v1h-1zM737 589h1v1h-1zM746 589h1v1h-1zM756 589h1v1h-1zM765 589h1v1h-1zM774 589h1v1h-1zM784 589h1v1h-1zM793 589h1v1h-1zM803 589h1v1h-1zM812 589h1v1h-1zM822 589h1v1h-1zM831 589h1v1h-1zM841 589h1v1h-1zM850 589h1v1h-1zM860 589h1v1h-1zM869 589h1v1h-1zM878 589h1v1h-1zM888 589h1v1h-1zM897 589h1v1h-1zM907 589h1v1h-1zM916 589h1v1h-1zM926 589h1v1h-1zM935 589h1v1h-1zM945 589h1v1h-1zM954 589h1v1h-1zM964 589h1v1h-1zM973 589h1v1h-1zM982 589h1v1h-1zM992 589h1v1h-1zM1001 589h1v1h-1zM1011 589h1v1h-1zM1020 589h1v1h-1zM1030 589h1v1h-1zM1039 589h1v1h-1zM1049 589h1v1h-1zM1058 589h1v1h-1zM1067 589h1v1h-1zM1077 589h1v1h-1zM1086 589h1v1h-1zM1096 589h1v1h-1zM1105 589h1v1h-1zM1115 589h1v1h-1zM1124 589h1v1h-1zM1134 589h1v1h-1zM1143 589h1v1h-1zM1152 589h1v1h-1zM1162 589h1v1h-1zM1171 589h1v1h-1zM1181 589h1v1h-1zM1190 589h1v1h-1zM1200 589h1v1h-1zM500 599h1v1h-1zM510 599h1v1h-1zM519 599h1v1h-1zM529 599h1v1h-1zM538 599h1v1h-1zM548 599h1v1h-1zM557 599h1v1h-1zM567 599h1v1h-1zM576 599h1v1h-1zM586 599h1v1h-1zM595 599h1v1h-1zM604 599h1v1h-1zM614 599h1v1h-1zM623 599h1v1h-1zM633 599h1v1h-1zM642 599h1v1h-1zM652 599h1v1h-1zM661 599h1v1h-1zM671 599h1v1h-1zM680 599h1v1h-1zM689 599h1v1h-1zM699 599h1v1h-1zM708 599h1v1h-1zM718 599h1v1h-1zM727 599h1v1h-1zM737 599h1v1h-1zM746 599h1v1h-1zM756 599h1v1h-1zM765 599h1v1h-1zM774 599h1v1h-1zM784 599h1v1h-1zM793 599h1v1h-1zM803 599h1v1h-1zM812 599h1v1h-1zM822 599h1v1h-1zM831 599h1v1h-1zM841 599h1v1h-1zM850 599h1v1h-1zM860 599h1v1h-1zM869 599h1v1h-1zM878 599h1v1h-1zM888 599h1v1h-1zM897 599h1v1h-1zM907 599h1v1h-1zM916 599h1v1h-1zM926 599h1v1h-1zM935 599h1v1h-1zM945 599h1v1h-1zM954 599h1v1h-1zM964 599h1v1h-1zM973 599h1v1h-1zM982 599h1v1h-1zM992 599h1v1h-1zM1001 599h1v1h-1zM1011 599h1v1h-1zM1020 599h1v1h-1zM1030 599h1v1h-1zM1039 599h1v1h-1zM1049 599h1v1h-1zM1058 599h1v1h-1zM1067 599h1v1h-1zM1077 599h1v1h-1zM1086 599h1v1h-1zM1096 599h1v1h-1zM1105 599h1v1h-1zM1115 599h1v1h-1zM1124 599h1v1h-1zM1134 599h1v1h-1zM1143 599h1v1h-1zM1152 599h1v1h-1zM1162 599h1v1h-1zM1171 599h1v1h-1zM1181 599h1v1h-1zM1190 599h1v1h-1zM1200 599h1v1h-1zM500 608h1v1h-1zM510 608h1v1h-1zM519 608h1v1h-1zM529 608h1v1h-1zM538 608h1v1h-1zM548 608h1v1h-1zM557 608h1v1h-1zM567 608h1v1h-1zM576 608h1v1h-1zM586 608h1v1h-1zM595 608h1v1h-1zM604 608h1v1h-1zM614 608h1v1h-1zM623 608h1v1h-1zM633 608h1v1h-1zM642 608h1v1h-1zM652 608h1v1h-1zM661 608h1v1h-1zM671 608h1v1h-1zM680 608h1v1h-1zM689 608h1v1h-1zM699 608h1v1h-1zM708 608h1v1h-1zM718 608h1v1h-1zM727 608h1v1h-1zM737 608h1v1h-1zM746 608h1v1h-1zM756 608h1v1h-1zM765 608h1v1h-1zM774 608h1v1h-1zM784 608h1v1h-1zM793 608h1v1h-1zM803 608h1v1h-1zM812 608h1v1h-1zM822 608h1v1h-1zM831 608h1v1h-1zM841 608h1v1h-1zM850 608h1v1h-1zM860 608h1v1h-1zM869 608h1v1h-1zM878 608h1v1h-1zM888 608h1v1h-1zM897 608h1v1h-1zM907 608h1v1h-1zM916 608h1v1h-1zM926 608h1v1h-1zM935 608h1v1h-1zM945 608h1v1h-1zM954 608h1v1h-1zM964 608h1v1h-1zM973 608h1v1h-1zM982 608h1v1h-1zM992 608h1v1h-1zM1001 608h1v1h-1zM1011 608h1v1h-1zM1020 608h1v1h-1zM1030 608h1v1h-1zM1039 608h1v1h-1zM1049 608h1v1h-1zM1058 608h1v1h-1zM1067 608h1v1h-1zM1077 608h1v1h-1zM1086 608h1v1h-1zM1096 608h1v1h-1zM1105 608h1v1h-1zM1115 608h1v1h-1zM1124 608h1v1h-1zM1134 608h1v1h-1zM1143 608h1v1h-1zM1152 608h1v1h-1zM1162 608h1v1h-1zM1171 608h1v1h-1zM1181 608h1v1h-1zM1190 608h1v1h-1zM1200 608h1v1h-1zM500 618h1v1h-1zM510 618h1v1h-1zM519 618h1v1h-1zM529 618h1v1h-1zM538 618h1v1h-1zM548 618h1v1h-1zM557 618h1v1h-1zM567 618h1v1h-1zM576 618h1v1h-1zM586 618h1v1h-1zM595 618h1v1h-1zM604 618h1v1h-1zM614 618h1v1h-1zM623 618h1v1h-1zM633 618h1v1h-1zM642 618h1v1h-1zM652 618h1v1h-1zM661 618h1v1h-1zM671 618h1v1h-1zM680 618h1v1h-1zM689 618h1v1h-1zM699 618h1v1h-1zM708 618h1v1h-1zM718 618h1v1h-1zM727 618h1v1h-1zM737 618h1v1h-1zM746 618h1v1h-1zM756 618h1v1h-1zM765 618h1v1h-1zM774 618h1v1h-1zM784 618h1v1h-1zM793 618h1v1h-1zM803 618h1v1h-1zM812 618h1v1h-1zM822 618h1v1h-1zM831 618h1v1h-1zM841 618h1v1h-1zM850 618h1v1h-1zM860 618h1v1h-1zM869 618h1v1h-1zM878 618h1v1h-1zM888 618h1v1h-1zM897 618h1v1h-1zM907 618h1v1h-1zM916 618h1v1h-1zM926 618h1v1h-1zM935 618h1v1h-1zM945 618h1v1h-1zM954 618h1v1h-1zM964 618h1v1h-1zM973 618h1v1h-1zM982 618h1v1h-1zM992 618h1v1h-1zM1001 618h1v1h-1zM1011 618h1v1h-1zM1020 618h1v1h-1zM1030 618h1v1h-1zM1039 618h1v1h-1zM1049 618h1v1h-1zM1058 618h1v1h-1zM1067 618h1v1h-1zM1077 618h1v1h-1zM1086 618h1v1h-1zM1096 618h1v1h-1zM1105 618h1v1h-1zM1115 618h1v1h-1zM1124 618h1v1h-1zM1134 618h1v1h-1zM1143 618h1v1h-1zM1152 618h1v1h-1zM1162 618h1v1h-1zM1171 618h1v1h-1zM1181 618h1v1h-1zM1190 618h1v1h-1zM1200 618h1v1h-1zM500 627h1v1h-1zM510 627h1v1h-1zM519 627h1v1h-1zM529 627h1v1h-1zM538 627h1v1h-1zM548 627h1v1h-1zM557 627h1v1h-1zM567 627h1v1h-1zM576 627h1v1h-1zM586 627h1v1h-1zM595 627h1v1h-1zM604 627h1v1h-1zM614 627h1v1h-1zM623 627h1v1h-1zM633 627h1v1h-1zM642 627h1v1h-1zM652 627h1v1h-1zM661 627h1v1h-1zM671 627h1v1h-1zM680 627h1v1h-1zM689 627h1v1h-1zM699 627h1v1h-1zM708 627h1v1h-1zM718 627h1v1h-1zM727 627h1v1h-1zM737 627h1v1h-1zM746 627h1v1h-1zM756 627h1v1h-1zM765 627h1v1h-1zM774 627h1v1h-1zM784 627h1v1h-1zM793 627h1v1h-1zM803 627h1v1h-1zM812 627h1v1h-1zM822 627h1v1h-1zM831 627h1v1h-1zM841 627h1v1h-1zM850 627h1v1h-1zM860 627h1v1h-1zM869 627h1v1h-1zM878 627h1v1h-1zM888 627h1v1h-1zM897 627h1v1h-1zM907 627h1v1h-1zM916 627h1v1h-1zM926 627h1v1h-1zM935 627h1v1h-1zM945 627h1v1h-1zM954 627h1v1h-1zM964 627h1v1h-1zM973 627h1v1h-1zM982 627h1v1h-1zM992 627h1v1h-1zM1001 627h1v1h-1zM1011 627h1v1h-1zM1020 627h1v1h-1zM1030 627h1v1h-1zM1039 627h1v1h-1zM1049 627h1v1h-1zM1058 627h1v1h-1zM1067 627h1v1h-1zM1077 627h1v1h-1zM1086 627h1v1h-1zM1096 627h1v1h-1zM1105 627h1v1h-1zM1115 627h1v1h-1zM1124 627h1v1h-1zM1134 627h1v1h-1zM1143 627h1v1h-1zM1152 627h1v1h-1zM1162 627h1v1h-1zM1171 627h1v1h-1zM1181 627h1v1h-1zM1190 627h1v1h-1zM1200 627h1v1h-1zM500 637h1v1h-1zM510 637h1v1h-1zM519 637h1v1h-1zM529 637h1v1h-1zM538 637h1v1h-1zM548 637h1v1h-1zM557 637h1v1h-1zM567 637h1v1h-1zM576 637h1v1h-1zM586 637h1v1h-1zM595 637h1v1h-1zM604 637h1v1h-1zM614 637h1v1h-1zM623 637h1v1h-1zM633 637h1v1h-1zM642 637h1v1h-1zM652 637h1v1h-1zM661 637h1v1h-1zM671 637h1v1h-1zM680 637h1v1h-1zM689 637h1v1h-1zM699 637h1v1h-1zM708 637h1v1h-1zM718 637h1v1h-1zM727 637h1v1h-1zM737 637h1v1h-1zM746 637h1v1h-1zM756 637h1v1h-1zM765 637h1v1h-1zM774 637h1v1h-1zM784 637h1v1h-1zM793 637h1v1h-1zM803 637h1v1h-1zM812 637h1v1h-1zM822 637h1v1h-1zM831 637h1v1h-1zM841 637h1v1h-1zM850 637h1v1h-1zM860 637h1v1h-1zM869 637h1v1h-1zM878 637h1v1h-1zM888 637h1v1h-1zM897 637h1v1h-1zM907 637h1v1h-1zM916 637h1v1h-1zM926 637h1v1h-1zM935 637h1v1h-1zM945 637h1v1h-1zM954 637h1v1h-1zM964 637h1v1h-1zM973 637h1v1h-1zM982 637h1v1h-1zM992 637h1v1h-1zM1001 637h1v1h-1zM1011 637h1v1h-1zM1020 637h1v1h-1zM1030 637h1v1h-1zM1039 637h1v1h-1zM1049 637h1v1h-1zM1058 637h1v1h-1zM1067 637h1v1h-1zM1077 637h1v1h-1zM1086 637h1v1h-1zM1096 637h1v1h-1zM1105 637h1v1h-1zM1115 637h1v1h-1zM1124 637h1v1h-1zM1134 637h1v1h-1zM1143 637h1v1h-1zM1152 637h1v1h-1zM1162 637h1v1h-1zM1171 637h1v1h-1zM1181 637h1v1h-1zM1190 637h1v1h-1zM1200 637h1v1h-1zM500 646h1v1h-1zM510 646h1v1h-1zM519 646h1v1h-1zM529 646h1v1h-1zM538 646h1v1h-1zM548 646h1v1h-1zM557 646h1v1h-1zM567 646h1v1h-1zM576 646h1v1h-1zM586 646h1v1h-1zM595 646h1v1h-1zM604 646h1v1h-1zM614 646h1v1h-1zM623 646h1v1h-1zM633 646h1v1h-1zM642 646h1v1h-1zM652 646h1v1h-1zM661 646h1v1h-1zM671 646h1v1h-1zM680 646h1v1h-1zM689 646h1v1h-1zM699 646h1v1h-1zM708 646h1v1h-1zM718 646h1v1h-1zM727 646h1v1h-1zM737 646h1v1h-1zM746 646h1v1h-1zM756 646h1v1h-1zM765 646h1v1h-1zM774 646h1v1h-1zM784 646h1v1h-1zM793 646h1v1h-1zM803 646h1v1h-1zM812 646h1v1h-1zM822 646h1v1h-1zM831 646h1v1h-1zM841 646h1v1h-1zM850 646h1v1h-1zM860 646h1v1h-1zM869 646h1v1h-1zM878 646h1v1h-1zM888 646h1v1h-1zM897 646h1v1h-1zM907 646h1v1h-1zM916 646h1v1h-1zM926 646h1v1h-1zM935 646h1v1h-1zM945 646h1v1h-1zM954 646h1v1h-1zM964 646h1v1h-1zM973 646h1v1h-1zM982 646h1v1h-1zM992 646h1v1h-1zM1001 646h1v1h-1zM1011 646h1v1h-1zM1020 646h1v1h-1zM1030 646h1v1h-1zM1039 646h1v1h-1zM1049 646h1v1h-1zM1058 646h1v1h-1zM1067 646h1v1h-1zM1077 646h1v1h-1zM1086 646h1v1h-1zM1096 646h1v1h-1zM1105 646h1v1h-1zM1115 646h1v1h-1zM1124 646h1v1h-1zM1134 646h1v1h-1zM1143 646h1v1h-1zM1152 646h1v1h-1zM1162 646h1v1h-1zM1171 646h1v1h-1zM1181 646h1v1h-1zM1190 646h1v1h-1zM1200 646h1v1h-1zM500 656h1v1h-1zM510 656h1v1h-1zM519 656h1v1h-1zM529 656h1v1h-1zM538 656h1v1h-1zM548 656h1v1h-1zM557 656h1v1h-1zM567 656h1v1h-1zM576 656h1v1h-1zM586 656h1v1h-1zM595 656h1v1h-1zM604 656h1v1h-1zM614 656h1v1h-1zM623 656h1v1h-1zM633 656h1v1h-1zM642 656h1v1h-1zM652 656h1v1h-1zM661 656h1v1h-1zM671 656h1v1h-1zM680 656h1v1h-1zM689 656h1v1h-1zM699 656h1v1h-1zM708 656h1v1h-1zM718 656h1v1h-1zM727 656h1v1h-1zM737 656h1v1h-1zM746 656h1v1h-1zM756 656h1v1h-1zM765 656h1v1h-1zM774 656h1v1h-1zM784 656h1v1h-1zM793 656h1v1h-1zM803 656h1v1h-1zM812 656h1v1h-1zM822 656h1v1h-1zM831 656h1v1h-1zM841 656h1v1h-1zM850 656h1v1h-1zM860 656h1v1h-1zM869 656h1v1h-1zM878 656h1v1h-1zM888 656h1v1h-1zM897 656h1v1h-1zM907 656h1v1h-1zM916 656h1v1h-1zM926 656h1v1h-1zM935 656h1v1h-1zM945 656h1v1h-1zM954 656h1v1h-1zM964 656h1v1h-1zM973 656h1v1h-1zM982 656h1v1h-1zM992 656h1v1h-1zM1001 656h1v1h-1zM1011 656h1v1h-1zM1020 656h1v1h-1zM1030 656h1v1h-1zM1039 656h1v1h-1zM1049 656h1v1h-1zM1058 656h1v1h-1zM1067 656h1v1h-1zM1077 656h1v1h-1zM1086 656h1v1h-1zM1096 656h1v1h-1zM1105 656h1v1h-1zM1115 656h1v1h-1zM1124 656h1v1h-1zM1134 656h1v1h-1zM1143 656h1v1h-1zM1152 656h1v1h-1zM1162 656h1v1h-1zM1171 656h1v1h-1zM1181 656h1v1h-1zM1190 656h1v1h-1zM1200 656h1v1h-1zM500 665h1v1h-1zM510 665h1v1h-1zM519 665h1v1h-1zM529 665h1v1h-1zM538 665h1v1h-1zM548 665h1v1h-1zM557 665h1v1h-1zM567 665h1v1h-1zM576 665h1v1h-1zM586 665h1v1h-1zM595 665h1v1h-1zM604 665h1v1h-1zM614 665h1v1h-1zM623 665h1v1h-1zM633 665h1v1h-1zM642 665h1v1h-1zM652 665h1v1h-1zM661 665h1v1h-1zM671 665h1v1h-1zM680 665h1v1h-1zM689 665h1v1h-1zM699 665h1v1h-1zM708 665h1v1h-1zM718 665h1v1h-1zM727 665h1v1h-1zM737 665h1v1h-1zM746 665h1v1h-1zM756 665h1v1h-1zM765 665h1v1h-1zM774 665h1v1h-1zM784 665h1v1h-1zM793 665h1v1h-1zM803 665h1v1h-1zM812 665h1v1h-1zM822 665h1v1h-1zM831 665h1v1h-1zM841 665h1v1h-1zM850 665h1v1h-1zM860 665h1v1h-1zM869 665h1v1h-1zM878 665h1v1h-1zM888 665h1v1h-1zM897 665h1v1h-1zM907 665h1v1h-1zM916 665h1v1h-1zM926 665h1v1h-1zM935 665h1v1h-1zM945 665h1v1h-1zM954 665h1v1h-1zM964 665h1v1h-1zM973 665h1v1h-1zM982 665h1v1h-1zM992 665h1v1h-1zM1001 665h1v1h-1zM1011 665h1v1h-1zM1020 665h1v1h-1zM1030 665h1v1h-1zM1039 665h1v1h-1zM1049 665h1v1h-1zM1058 665h1v1h-1zM1067 665h1v1h-1zM1077 665h1v1h-1zM1086 665h1v1h-1zM1096 665h1v1h-1zM1105 665h1v1h-1zM1115 665h1v1h-1zM1124 665h1v1h-1zM1134 665h1v1h-1zM1143 665h1v1h-1zM1152 665h1v1h-1zM1162 665h1v1h-1zM1171 665h1v1h-1zM1181 665h1v1h-1zM1190 665h1v1h-1zM1200 665h1v1h-1zM500 674h1v1h-1zM510 674h1v1h-1zM519 674h1v1h-1zM529 674h1v1h-1zM538 674h1v1h-1zM548 674h1v1h-1zM557 674h1v1h-1zM567 674h1v1h-1zM576 674h1v1h-1zM586 674h1v1h-1zM595 674h1v1h-1zM604 674h1v1h-1zM614 674h1v1h-1zM623 674h1v1h-1zM633 674h1v1h-1zM642 674h1v1h-1zM652 674h1v1h-1zM661 674h1v1h-1zM671 674h1v1h-1zM680 674h1v1h-1zM689 674h1v1h-1zM699 674h1v1h-1zM708 674h1v1h-1zM718 674h1v1h-1zM727 674h1v1h-1zM737 674h1v1h-1zM746 674h1v1h-1zM756 674h1v1h-1zM765 674h1v1h-1zM774 674h1v1h-1zM784 674h1v1h-1zM793 674h1v1h-1zM803 674h1v1h-1zM812 674h1v1h-1zM822 674h1v1h-1zM831 674h1v1h-1zM841 674h1v1h-1zM850 674h1v1h-1zM860 674h1v1h-1zM869 674h1v1h-1zM878 674h1v1h-1zM888 674h1v1h-1zM897 674h1v1h-1zM907 674h1v1h-1zM916 674h1v1h-1zM926 674h1v1h-1zM935 674h1v1h-1zM945 674h1v1h-1zM954 674h1v1h-1zM964 674h1v1h-1zM973 674h1v1h-1zM982 674h1v1h-1zM992 674h1v1h-1zM1001 674h1v1h-1zM1011 674h1v1h-1zM1020 674h1v1h-1zM1030 674h1v1h-1zM1039 674h1v1h-1zM1049 674h1v1h-1zM1058 674h1v1h-1zM1067 674h1v1h-1zM1077 674h1v1h-1zM1086 674h1v1h-1zM1096 674h1v1h-1zM1105 674h1v1h-1zM1115 674h1v1h-1zM1124 674h1v1h-1zM1134 674h1v1h-1zM1143 674h1v1h-1zM1152 674h1v1h-1zM1162 674h1v1h-1zM1171 674h1v1h-1zM1181 674h1v1h-1zM1190 674h1v1h-1zM1200 674h1v1h-1zM500 684h1v1h-1zM510 684h1v1h-1zM519 684h1v1h-1zM529 684h1v1h-1zM538 684h1v1h-1zM548 684h1v1h-1zM557 684h1v1h-1zM567 684h1v1h-1zM576 684h1v1h-1zM586 684h1v1h-1zM595 684h1v1h-1zM604 684h1v1h-1zM614 684h1v1h-1zM623 684h1v1h-1zM633 684h1v1h-1zM642 684h1v1h-1zM652 684h1v1h-1zM661 684h1v1h-1zM671 684h1v1h-1zM680 684h1v1h-1zM689 684h1v1h-1zM699 684h1v1h-1zM708 684h1v1h-1zM718 684h1v1h-1zM727 684h1v1h-1zM737 684h1v1h-1zM746 684h1v1h-1zM756 684h1v1h-1zM765 684h1v1h-1zM774 684h1v1h-1zM784 684h1v1h-1zM793 684h1v1h-1zM803 684h1v1h-1zM812 684h1v1h-1zM822 684h1v1h-1zM831 684h1v1h-1zM841 684h1v1h-1zM850 684h1v1h-1zM860 684h1v1h-1zM869 684h1v1h-1zM878 684h1v1h-1zM888 684h1v1h-1zM897 684h1v1h-1zM907 684h1v1h-1zM916 684h1v1h-1zM926 684h1v1h-1zM935 684h1v1h-1zM945 684h1v1h-1zM954 684h1v1h-1zM964 684h1v1h-1zM973 684h1v1h-1zM982 684h1v1h-1zM992 684h1v1h-1zM1001 684h1v1h-1zM1011 684h1v1h-1zM1020 684h1v1h-1zM1030 684h1v1h-1zM1039 684h1v1h-1zM1049 684h1v1h-1zM1058 684h1v1h-1zM1067 684h1v1h-1zM1077 684h1v1h-1zM1086 684h1v1h-1zM1096 684h1v1h-1zM1105 684h1v1h-1zM1115 684h1v1h-1zM1124 684h1v1h-1zM1134 684h1v1h-1zM1143 684h1v1h-1zM1152 684h1v1h-1zM1162 684h1v1h-1zM1171 684h1v1h-1zM1181 684h1v1h-1zM1190 684h1v1h-1zM1200 684h1v1h-1zM500 693h1v1h-1zM510 693h1v1h-1zM519 693h1v1h-1zM529 693h1v1h-1zM538 693h1v1h-1zM548 693h1v1h-1zM557 693h1v1h-1zM567 693h1v1h-1zM576 693h1v1h-1zM586 693h1v1h-1zM595 693h1v1h-1zM604 693h1v1h-1zM614 693h1v1h-1zM623 693h1v1h-1zM633 693h1v1h-1zM642 693h1v1h-1zM652 693h1v1h-1zM661 693h1v1h-1zM671 693h1v1h-1zM680 693h1v1h-1zM689 693h1v1h-1zM699 693h1v1h-1zM708 693h1v1h-1zM718 693h1v1h-1zM727 693h1v1h-1zM737 693h1v1h-1zM746 693h1v1h-1zM756 693h1v1h-1zM765 693h1v1h-1zM774 693h1v1h-1zM784 693h1v1h-1zM793 693h1v1h-1zM803 693h1v1h-1zM812 693h1v1h-1zM822 693h1v1h-1zM831 693h1v1h-1zM841 693h1v1h-1zM850 693h1v1h-1zM860 693h1v1h-1zM869 693h1v1h-1zM878 693h1v1h-1zM888 693h1v1h-1zM897 693h1v1h-1zM907 693h1v1h-1zM916 693h1v1h-1zM926 693h1v1h-1zM935 693h1v1h-1zM945 693h1v1h-1zM954 693h1v1h-1zM964 693h1v1h-1zM973 693h1v1h-1zM982 693h1v1h-1zM992 693h1v1h-1zM1001 693h1v1h-1zM1011 693h1v1h-1zM1020 693h1v1h-1zM1030 693h1v1h-1zM1039 693h1v1h-1zM1049 693h1v1h-1zM1058 693h1v1h-1zM1067 693h1v1h-1zM1077 693h1v1h-1zM1086 693h1v1h-1zM1096 693h1v1h-1zM1105 693h1v1h-1zM1115 693h1v1h-1zM1124 693h1v1h-1zM1134 693h1v1h-1zM1143 693h1v1h-1zM1152 693h1v1h-1zM1162 693h1v1h-1zM1171 693h1v1h-1zM1181 693h1v1h-1zM1190 693h1v1h-1zM1200 693h1v1h-1zM500 702h1v1h-1zM510 702h1v1h-1zM519 702h1v1h-1zM529 702h1v1h-1zM538 702h1v1h-1zM548 702h1v1h-1zM557 702h1v1h-1zM567 702h1v1h-1zM576 702h1v1h-1zM586 702h1v1h-1zM595 702h1v1h-1zM604 702h1v1h-1zM614 702h1v1h-1zM623 702h1v1h-1zM633 702h1v1h-1zM642 702h1v1h-1zM652 702h1v1h-1zM661 702h1v1h-1zM671 702h1v1h-1zM680 702h1v1h-1zM689 702h1v1h-1zM699 702h1v1h-1zM708 702h1v1h-1zM718 702h1v1h-1zM727 702h1v1h-1zM737 702h1v1h-1zM746 702h1v1h-1zM756 702h1v1h-1zM765 702h1v1h-1zM774 702h1v1h-1zM784 702h1v1h-1zM793 702h1v1h-1zM803 702h1v1h-1zM812 702h1v1h-1zM822 702h1v1h-1zM831 702h1v1h-1zM841 702h1v1h-1zM850 702h1v1h-1zM860 702h1v1h-1zM869 702h1v1h-1zM878 702h1v1h-1zM888 702h1v1h-1zM897 702h1v1h-1zM907 702h1v1h-1zM916 702h1v1h-1zM926 702h1v1h-1zM935 702h1v1h-1zM945 702h1v1h-1zM954 702h1v1h-1zM964 702h1v1h-1zM973 702h1v1h-1zM982 702h1v1h-1zM992 702h1v1h-1zM1001 702h1v1h-1zM1011 702h1v1h-1zM1020 702h1v1h-1zM1030 702h1v1h-1zM1039 702h1v1h-1zM1049 702h1v1h-1zM1058 702h1v1h-1zM1067 702h1v1h-1zM1077 702h1v1h-1zM1086 702h1v1h-1zM1096 702h1v1h-1zM1105 702h1v1h-1zM1115 702h1v1h-1zM1124 702h1v1h-1zM1134 702h1v1h-1zM1143 702h1v1h-1zM1152 702h1v1h-1zM1162 702h1v1h-1zM1171 702h1v1h-1zM1181 702h1v1h-1zM1190 702h1v1h-1zM1200 702h1v1h-1zM500 712h1v1h-1zM510 712h1v1h-1zM519 712h1v1h-1zM529 712h1v1h-1zM538 712h1v1h-1zM548 712h1v1h-1zM557 712h1v1h-1zM567 712h1v1h-1zM576 712h1v1h-1zM586 712h1v1h-1zM595 712h1v1h-1zM604 712h1v1h-1zM614 712h1v1h-1zM623 712h1v1h-1zM633 712h1v1h-1zM642 712h1v1h-1zM652 712h1v1h-1zM661 712h1v1h-1zM671 712h1v1h-1zM680 712h1v1h-1zM689 712h1v1h-1zM699 712h1v1h-1zM708 712h1v1h-1zM718 712h1v1h-1zM727 712h1v1h-1zM737 712h1v1h-1zM746 712h1v1h-1zM756 712h1v1h-1zM765 712h1v1h-1zM774 712h1v1h-1zM784 712h1v1h-1zM793 712h1v1h-1zM803 712h1v1h-1zM812 712h1v1h-1zM822 712h1v1h-1zM831 712h1v1h-1zM841 712h1v1h-1zM850 712h1v1h-1zM860 712h1v1h-1zM869 712h1v1h-1zM878 712h1v1h-1zM888 712h1v1h-1zM897 712h1v1h-1zM907 712h1v1h-1zM916 712h1v1h-1zM926 712h1v1h-1zM935 712h1v1h-1zM945 712h1v1h-1zM954 712h1v1h-1zM964 712h1v1h-1zM973 712h1v1h-1zM982 712h1v1h-1zM992 712h1v1h-1zM1001 712h1v1h-1zM1011 712h1v1h-1zM1020 712h1v1h-1zM1030 712h1v1h-1zM1039 712h1v1h-1zM1049 712h1v1h-1zM1058 712h1v1h-1zM1067 712h1v1h-1zM1077 712h1v1h-1zM1086 712h1v1h-1zM1096 712h1v1h-1zM1105 712h1v1h-1zM1115 712h1v1h-1zM1124 712h1v1h-1zM1134 712h1v1h-1zM1143 712h1v1h-1zM1152 712h1v1h-1zM1162 712h1v1h-1zM1171 712h1v1h-1zM1181 712h1v1h-1zM1190 712h1v1h-1zM1200 712h1v1h-1zM500 721h1v1h-1zM510 721h1v1h-1zM519 721h1v1h-1zM529 721h1v1h-1zM538 721h1v1h-1zM548 721h1v1h-1zM557 721h1v1h-1zM567 721h1v1h-1zM576 721h1v1h-1zM586 721h1v1h-1zM595 721h1v1h-1zM604 721h1v1h-1zM614 721h1v1h-1zM623 721h1v1h-1zM633 721h1v1h-1zM642 721h1v1h-1zM652 721h1v1h-1zM661 721h1v1h-1zM671 721h1v1h-1zM680 721h1v1h-1zM689 721h1v1h-1zM699 721h1v1h-1zM708 721h1v1h-1zM718 721h1v1h-1zM727 721h1v1h-1zM737 721h1v1h-1zM746 721h1v1h-1zM756 721h1v1h-1zM765 721h1v1h-1zM774 721h1v1h-1zM784 721h1v1h-1zM793 721h1v1h-1zM803 721h1v1h-1zM812 721h1v1h-1zM822 721h1v1h-1zM831 721h1v1h-1zM841 721h1v1h-1zM850 721h1v1h-1zM860 721h1v1h-1zM869 721h1v1h-1zM878 721h1v1h-1zM888 721h1v1h-1zM897 721h1v1h-1zM907 721h1v1h-1zM916 721h1v1h-1zM926 721h1v1h-1zM935 721h1v1h-1zM945 721h1v1h-1zM954 721h1v1h-1zM964 721h1v1h-1zM973 721h1v1h-1zM982 721h1v1h-1zM992 721h1v1h-1zM1001 721h1v1h-1zM1011 721h1v1h-1zM1020 721h1v1h-1zM1030 721h1v1h-1zM1039 721h1v1h-1zM1049 721h1v1h-1zM1058 721h1v1h-1zM1067 721h1v1h-1zM1077 721h1v1h-1zM1086 721h1v1h-1zM1096 721h1v1h-1zM1105 721h1v1h-1zM1115 721h1v1h-1zM1124 721h1v1h-1zM1134 721h1v1h-1zM1143 721h1v1h-1zM1152 721h1v1h-1zM1162 721h1v1h-1zM1171 721h1v1h-1zM1181 721h1v1h-1zM1190 721h1v1h-1zM1200 721h1v1h-1zM500 731h1v1h-1zM510 731h1v1h-1zM519 731h1v1h-1zM529 731h1v1h-1zM538 731h1v1h-1zM548 731h1v1h-1zM557 731h1v1h-1zM567 731h1v1h-1zM576 731h1v1h-1zM586 731h1v1h-1zM595 731h1v1h-1zM604 731h1v1h-1zM614 731h1v1h-1zM623 731h1v1h-1zM633 731h1v1h-1zM642 731h1v1h-1zM652 731h1v1h-1zM661 731h1v1h-1zM671 731h1v1h-1zM680 731h1v1h-1zM689 731h1v1h-1zM699 731h1v1h-1zM708 731h1v1h-1zM718 731h1v1h-1zM727 731h1v1h-1zM737 731h1v1h-1zM746 731h1v1h-1zM756 731h1v1h-1zM765 731h1v1h-1zM774 731h1v1h-1zM784 731h1v1h-1zM793 731h1v1h-1zM803 731h1v1h-1zM812 731h1v1h-1zM822 731h1v1h-1zM831 731h1v1h-1zM841 731h1v1h-1zM850 731h1v1h-1zM860 731h1v1h-1zM869 731h1v1h-1zM878 731h1v1h-1zM888 731h1v1h-1zM897 731h1v1h-1zM907 731h1v1h-1zM916 731h1v1h-1zM926 731h1v1h-1zM935 731h1v1h-1zM945 731h1v1h-1zM954 731h1v1h-1zM964 731h1v1h-1zM973 731h1v1h-1zM982 731h1v1h-1zM992 731h1v1h-1zM1001 731h1v1h-1zM1011 731h1v1h-1zM1020 731h1v1h-1zM1030 731h1v1h-1zM1039 731h1v1h-1zM1049 731h1v1h-1zM1058 731h1v1h-1zM1067 731h1v1h-1zM1077 731h1v1h-1zM1086 731h1v1h-1zM1096 731h1v1h-1zM1105 731h1v1h-1zM1115 731h1v1h-1zM1124 731h1v1h-1zM1134 731h1v1h-1zM1143 731h1v1h-1zM1152 731h1v1h-1zM1162 731h1v1h-1zM1171 731h1v1h-1zM1181 731h1v1h-1zM1190 731h1v1h-1zM1200 731h1v1h-1zM500 740h1v1h-1zM510 740h1v1h-1zM519 740h1v1h-1zM529 740h1v1h-1zM538 740h1v1h-1zM548 740h1v1h-1zM557 740h1v1h-1zM567 740h1v1h-1zM576 740h1v1h-1zM586 740h1v1h-1zM595 740h1v1h-1zM604 740h1v1h-1zM614 740h1v1h-1zM623 740h1v1h-1zM633 740h1v1h-1zM642 740h1v1h-1zM652 740h1v1h-1zM661 740h1v1h-1zM671 740h1v1h-1zM680 740h1v1h-1zM689 740h1v1h-1zM699 740h1v1h-1zM708 740h1v1h-1zM718 740h1v1h-1zM727 740h1v1h-1zM737 740h1v1h-1zM746 740h1v1h-1zM756 740h1v1h-1zM765 740h1v1h-1zM774 740h1v1h-1zM784 740h1v1h-1zM793 740h1v1h-1zM803 740h1v1h-1zM812 740h1v1h-1zM822 740h1v1h-1zM831 740h1v1h-1zM841 740h1v1h-1zM850 740h1v1h-1zM860 740h1v1h-1zM869 740h1v1h-1zM878 740h1v1h-1zM888 740h1v1h-1zM897 740h1v1h-1zM907 740h1v1h-1zM916 740h1v1h-1zM926 740h1v1h-1zM935 740h1v1h-1zM945 740h1v1h-1zM954 740h1v1h-1zM964 740h1v1h-1zM973 740h1v1h-1zM982 740h1v1h-1zM992 740h1v1h-1zM1001 740h1v1h-1zM1011 740h1v1h-1zM1020 740h1v1h-1zM1030 740h1v1h-1zM1039 740h1v1h-1zM1049 740h1v1h-1zM1058 740h1v1h-1zM1067 740h1v1h-1zM1077 740h1v1h-1zM1086 740h1v1h-1zM1096 740h1v1h-1zM1105 740h1v1h-1zM1115 740h1v1h-1zM1124 740h1v1h-1zM1134 740h1v1h-1zM1143 740h1v1h-1zM1152 740h1v1h-1zM1162 740h1v1h-1zM1171 740h1v1h-1zM1181 740h1v1h-1zM1190 740h1v1h-1zM1200 740h1v1h-1z" fill="#c4c4c4"/></svg>
<div class="a" style="left:491px;top:320px;width:719px;height:2px;background:repeating-linear-gradient(90deg,#b0b0b0 0 4px,transparent 4px 6px)"></div>
<div class="a" style="left:490px;top:321px;width:1.4px;height:430px;background:repeating-linear-gradient(180deg,#999 0 4px,transparent 4px 6px)"></div>
<div class="a" style="left:1208px;top:321px;width:2px;height:430px;background:repeating-linear-gradient(180deg,#ababab 0 4px,transparent 4px 6px)"></div>
<svg class="a" style="left:510px;top:328px" width="58" height="62" viewBox="0 0 58 62">
<path d="M19.5 6.5C19.8 3.6 21 1.8 23 1.8H35.5C37.5 1.8 38.7 3.6 39 6.5Z" fill="#000"/>
<rect x="3.4" y="6" width="49.6" height="7" rx="2.4" fill="#000"/>
<path d="M7 13H49.1L47.3 54.6C47.1 57 45.3 58.6 43 58.6H13.2C10.9 58.6 9.1 57 8.9 54.6Z" fill="#999"/>
</svg>
<div class="t" style="left:603.5px;top:348.8px;font-size:20px;font-weight:bold;color:#0c3c7c;letter-spacing:-0.05px">Likwidacja zasobów</div>
<svg class="a" style="left:1090px;top:324px" width="86" height="42" viewBox="0 0 86 42">
<path d="M7.3 20.5L16.6 5.9H32.1L40.7 20.5L32.1 34.9H16.6Z" fill="none" stroke="#4150a8" stroke-width="3.9"/>
<path d="M46.8 4H53.2L60.5 15.2V17.5L58.7 20.5Z M46.8 37H53.2L60.5 25.8V23.5L58.7 20.5Z M81.1 4H73.3L67 15.2V17.5L68.8 20.5Z M81.1 37H73.3L67 25.8V23.5L68.8 20.5Z" fill="#4150a8"/>
</svg>
<div class="t" style="left:1088.4px;top:369.6px;font-size:13.4px;font-weight:bold;color:#111">Infonet Projekt</div>
<div class="a" style="left:1126px;top:385.5px;width:50px;height:2.5px;overflow:hidden"><div class="t" style="left:0;top:0;font-size:11px;color:#222">S.A.</div></div>
<div class="a" style="left:491px;top:394px;width:720px;height:4px;background:#5b5b5b"></div>
<div class="t" style="left:686.2px;top:417.9px;font-size:13.2px;color:#000">tekst</div>
<div class="t" style="left:846.3px;top:417.8px;font-size:13.3px;color:#000">[Products.Name]</div>
<svg class="a" style="left:491px;top:448px" width="20" height="18" viewBox="0 0 20 18"><path d="M14.8 4L3.6 13.8" stroke="#9a9a9a" stroke-width="2.6"/><path d="M3.5 4L15.3 14.6" stroke="#000" stroke-width="2.8"/></svg>
<div class="t" style="left:525.6px;top:449.6px;font-size:13.2px;color:#000">Likwidowany zakres</div>
<div class="a" style="left:491px;top:476px;width:718px;height:28px;background:#d0d0d0"></div>
<div class="a" style="left:519px;top:477px;width:1px;height:26px;background:#dcdcdc"></div>
<div class="a" style="left:718px;top:477px;width:1px;height:26px;background:#dcdcdc"></div>
<div class="a" style="left:859px;top:477px;width:1px;height:26px;background:#dcdcdc"></div>
<div class="a" style="left:982.5px;top:477px;width:1px;height:26px;background:#dcdcdc"></div>
<div class="a" style="left:1105px;top:477px;width:1px;height:26px;background:#dcdcdc"></div>
<div class="t" style="left:499.5px;top:486.3px;font-size:10px;font-weight:bold;color:#000">Lp.</div>
<div class="t" style="left:525.6px;top:485.0px;font-size:13px;font-weight:bold;color:#000">Nazwa</div>
<div class="t" style="left:723.7px;top:485.0px;font-size:13px;font-weight:bold;color:#000">Model</div>
<div class="t" style="left:866.4px;top:485.0px;font-size:13px;font-weight:bold;color:#000">S/N</div>
<div class="t" style="left:988.9px;top:485.0px;font-size:13px;font-weight:bold;color:#000">Nr inw.</div>
<div class="t" style="left:1111.4px;top:485.0px;font-size:13px;font-weight:bold;color:#000">Data</div>
<div class="a" style="left:491px;top:514px;width:27px;height:38px;overflow:hidden"><div class="t" style="left:6.3px;top:13.5px;font-size:13.2px;color:#000">[RowNumber]</div></div>
<div class="t" style="left:525.6px;top:527.5px;font-size:13.2px;color:#000">[Assets.Name]</div>
<div class="t" style="left:723.7px;top:527.4px;font-size:13.3px;color:#000">[Assets.Model]</div>
<div class="t" style="left:865.8px;top:527.5px;font-size:13.25px;color:#000">[Assets.SerialNo]</div>
<div class="a" style="left:982px;top:514px;width:123px;height:38px;overflow:hidden"><div class="t" style="left:6.3px;top:13.5px;font-size:13.2px;color:#000">[Assets.InventoryNo]</div></div>
<div class="a" style="left:1105px;top:514px;width:106px;height:38px;overflow:hidden"><div class="t" style="left:5.9px;top:13.5px;font-size:13.2px;color:#000">[FormatDateTime([Assets.Date])]</div></div>
<div class="a" style="left:897px;top:636px;width:96px;height:20px;overflow:hidden"><div class="t" style="left:6.0px;top:2.4px;font-size:13.2px;font-style:italic;color:#000">[FormatDateTime([Date])]</div></div>
<div class="a" style="left:900px;top:655px;width:305px;height:1px;background:#111"></div>
<div class="t" style="left:1031px;top:661.1px;font-size:10.7px;color:#000">(podpis)</div>
<div class="a" style="left:500px;top:692.5px;width:718px;height:1.2px;background:#555"></div>
<div class="t" style="left:506.3px;top:704.5px;font-size:13.2px;color:#000">Oxari</div>
<svg class="a" style="left:763px;top:704px" width="14" height="14" viewBox="0 0 14 14"><rect x="0.5" y="0.5" width="12" height="12" fill="none" stroke="#d88" stroke-width="0.8"/><rect x="3.2" y="2" width="6.6" height="3" fill="none" stroke="#777" stroke-width="1.2"/><rect x="1.8" y="5" width="9.4" height="4.6" fill="#888"/><rect x="3.2" y="8" width="6.6" height="3.4" fill="#fff" stroke="#777" stroke-width="1.2"/></svg>
<div class="a" style="left:774px;top:702px;width:256px;height:20px;overflow:hidden"><div class="t" style="left:6.7px;top:-4.5px;font-size:13px;line-height:15px;color:#000;white-space:pre">[FormatDateTime([Date], "dd.MM.yyyy
HH:mm:ss")]</div></div>
<div class="t" style="left:1106px;top:705.0px;font-size:13px;color:#000">Strona:</div>
<div class="a" style="left:1152px;top:702px;width:19px;height:20px;overflow:hidden"><div class="t" style="right:3px;top:2.8px;font-size:13px;color:#000">[Page]</div></div>
<div class="t" style="left:1177px;top:705.0px;font-size:13px;color:#000">/</div>
<div class="a" style="left:1181px;top:702px;width:28px;height:20px;overflow:hidden"><div class="t" style="left:6.1px;top:3.0px;font-size:13px;color:#000">[TotalPages]</div></div>
<svg class="a" style="left:0;top:0" width="1300" height="800"><path d="M509.5 335.5V330.5H514.5M561.5 330.5H566.5V335.5M509.5 382.5V387.5H514.5M561.5 387.5H566.5V382.5M490.5 344.5V339.5H495.5M580.5 339.5H585.5V344.5M490.5 353.5V358.5H495.5M580.5 358.5H585.5V353.5M594.5 326V321H599.5M986.5 321H991.5V326M594.5 391.5V396.5H599.5M986.5 396.5H991.5V391.5M1095.5 326V321H1100.5M1166.5 321H1171.5V326M1095.5 363V368H1100.5M1166.5 368H1171.5V363M1057.5 373V368H1062.5M1204 368H1209V373M1057.5 382.5V387.5H1062.5M1204 387.5H1209V382.5M679.5 420V415H684.5M769.5 415H774.5V420M679.5 429.5V434.5H684.5M769.5 434.5H774.5V429.5M840 420V415H845M958.5 415H963.5V420M840 429.5V434.5H845M958.5 434.5H963.5V429.5M491 452.5V447.5H496M505 447.5H510V452.5M491 461.5V466.5H496M505 466.5H510V461.5M519 452.5V447.5H524M666 447.5H671V452.5M519 461.5V466.5H524M666 466.5H671V461.5M491.5 481.5V476.5H496.5M514 476.5H519V481.5M491.5 499V504H496.5M514 504H519V499M519 481.5V476.5H524M713 476.5H718V481.5M519 499V504H524M713 504H718V499M718 481.5V476.5H723M854 476.5H859V481.5M718 499V504H723M854 504H859V499M859 481.5V476.5H864M977.5 476.5H982.5V481.5M859 499V504H864M977.5 504H982.5V499M982.5 481.5V476.5H987.5M1100 476.5H1105V481.5M982.5 499V504H987.5M1100 504H1105V499M1105 481.5V476.5H1110M1204 476.5H1209V481.5M1105 499V504H1110M1204 504H1209V499M491.5 518.5V513.5H496.5M514 513.5H519V518.5M491.5 547V552H496.5M514 552H519V547M519 518.5V513.5H524M713 513.5H718V518.5M519 547V552H524M713 552H718V547M718 518.5V513.5H723M854 513.5H859V518.5M718 547V552H723M854 552H859V547M859 518.5V513.5H864M977.5 513.5H982.5V518.5M859 547V552H864M977.5 552H982.5V547M982.5 518.5V513.5H987.5M1100 513.5H1105V518.5M982.5 547V552H987.5M1100 552H1105V547M1105 518.5V513.5H1110M1204 513.5H1209V518.5M1105 547V552H1110M1204 552H1209V547M897 641.5V636.5H902M987.5 636.5H992.5V641.5M897 650V655H902M987.5 655H992.5V650M897 665V660H902M1195 660H1200V665M897 674.5V679.5H902M1195 679.5H1200V674.5M500 707.5V702.5H505M618 702.5H623V707.5M500 716.5V721.5H505M618 721.5H623V716.5M774 707.5V702.5H779M1025 702.5H1030V707.5M774 717V722H779M1025 722H1030V717M1076.5 707.5V702.5H1081.5M1147 702.5H1152V707.5M1076.5 716.5V721.5H1081.5M1147 721.5H1152V716.5M1152 707.5V702.5H1157M1166 702.5H1171V707.5M1152 716.5V721.5H1157M1166 721.5H1171V716.5M1171 706.5V702.5H1175M1177 702.5H1181V706.5M1171 717.5V721.5H1175M1177 721.5H1181V717.5M1181 707.5V702.5H1186M1204 702.5H1209V707.5M1181 716.5V721.5H1186M1204 721.5H1209V716.5" fill="none" stroke="#d27474" stroke-width="1"/></svg>
<!-- REPORT END -->
<!-- scrollbar -->
<div id="scr" class="a"></div>
<div id="thumb" class="a"></div>
<svg class="a" style="left:1904px;top:4px" width="16" height="9" viewBox="0 0 16 9"><path d="M4 7.5H12L8 3Z" fill="#a3a3a3"/></svg>
<svg class="a" style="left:1904px;top:905px" width="16" height="9" viewBox="0 0 16 9"><path d="M4 2H12L8 6.5Z" fill="#505050"/></svg>
</body></html>
